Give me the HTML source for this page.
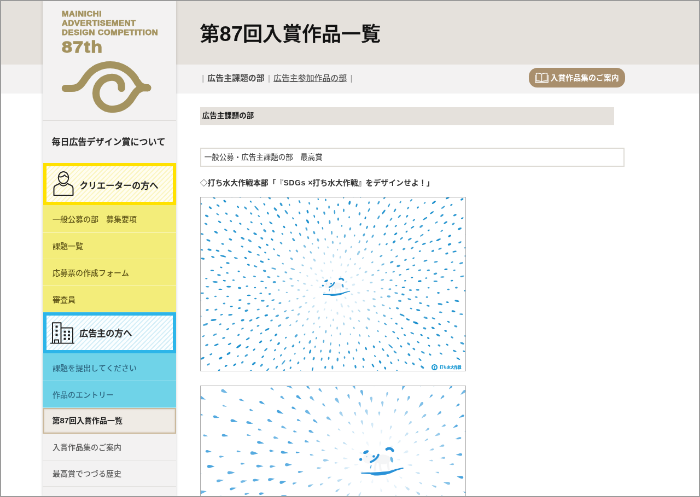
<!DOCTYPE html>
<html lang="ja">
<head>
<meta charset="utf-8">
<title>第87回入賞作品一覧 | 毎日広告デザイン賞</title>
<style>
html,body{margin:0;padding:0;background:#fff;overflow:hidden}
#page{text-spacing-trim:space-all;font-kerning:none}
body{width:700px;height:497px;position:relative;font-family:"Liberation Sans","Noto Sans CJK JP",sans-serif;color:#222}
#frame{position:absolute;left:0;top:0;width:698px;height:495px;border:1px solid #9a9a9a;z-index:10}
#page{position:absolute;left:0;top:0;width:1280px;height:909px;transform:scale(0.546875);transform-origin:0 0;overflow:hidden;will-change:transform}
#page *{box-sizing:border-box}
.abs{position:absolute}
.band1{left:0;top:0;width:1280px;height:117.6px;background:#e5e1dc}
.band2{left:0;top:117.6px;width:1280px;height:53.8px;background:#f3f2f2}
.side{left:77.5px;top:0;width:244.7px;height:909px;background:#f3f2f2;box-shadow:0 0 5px rgba(0,0,0,.18)}
.logo-t{left:35.5px;top:17px;font-weight:bold;font-size:14px;line-height:17px;color:#a4935f;letter-spacing:.55px;white-space:nowrap;-webkit-text-stroke:.75px #a4935f;transform:scaleX(1.07);transform-origin:0 0}
.logo-n{left:35px;top:70.8px;font-weight:bold;font-size:29px;line-height:30px;color:#a4935f;letter-spacing:1.2px;-webkit-text-stroke:1.3px #a4935f;transform:scaleX(1.17);transform-origin:0 0;white-space:nowrap}
.sep{left:0;width:100%;height:1px;background:#dcdad8}
.about{left:17px;top:248.1px;font-size:16px;line-height:24px;font-weight:500;-webkit-text-stroke:.4px #222;color:#222;white-space:nowrap}
.hbox{left:1px;width:243.5px;border:6px solid #ffe100;background:#fffef0}
.hbox .lbl{position:absolute;left:62px;top:0;font-size:16px;font-weight:500;-webkit-text-stroke:.4px #222;color:#222;white-space:nowrap}
.item{left:0;width:244.7px;height:49px;font-size:14px;font-weight:500;padding-left:18.5px;white-space:nowrap;color:#5f5518;border-bottom:1.5px solid rgba(255,255,255,.55)}
.y{background:#f3ed7a}
.c{background:#6fd3e8;color:#2f6882}
.g{background:#f3f2f2;color:#5c5c5c;border-bottom:1.5px solid #e4e2e0}
.dg{font-size:106%}
.act{background:#efebe5;color:#222;font-weight:bold;border:2.5px solid #cbb99c;padding-left:16px;box-shadow:inset 0 0 3px rgba(150,120,80,.35)}
h1{margin:0;left:365.5px;top:35.3px;font-size:36px;line-height:54px;font-weight:500;-webkit-text-stroke:.55px #111;color:#111;white-space:nowrap}
.nav{left:362.9px;top:131px;font-size:14.9px;line-height:24px;color:#666;white-space:nowrap}
.nav b{color:#4a4a4a}
.nav u{color:#5a5a5a;font-weight:500}
.nav i{font-style:normal;color:#999;padding:0 6.3px}
.btn{left:966.5px;top:124.3px;width:176.5px;height:36px;border-radius:15.5px;background:#a98f6d;color:#fff;font-weight:bold;font-size:13.9px;line-height:36px;padding-left:40px;white-space:nowrap}
.sec{left:365.7px;top:195.5px;width:757px;height:33px;background:#e5e1dc;font-size:13.5px;font-weight:bold;line-height:32px;padding-left:4px;color:#222}
.cat{left:365.7px;top:269.5px;width:776px;height:35.5px;border:2px solid #dedbd5;font-size:13.5px;line-height:31px;padding-left:6px;color:#505050;background:#fff;font-weight:500}
.ttl{left:365.7px;top:321.5px;font-size:13.9px;line-height:24px;font-weight:bold;color:#333;white-space:nowrap}
.img{left:365.7px;width:486px;height:319px;border:1.6px solid #a9a9a9;background:#fff;overflow:hidden}
.img svg{position:absolute;left:0;top:0}
</style>
</head>
<body>
<div id="page">
<div class="abs band1"></div><div class="abs band2"></div>
<div class="abs side">
<div class="abs logo-t">MAINICHI<br>ADVERTISEMENT<br>DESIGN COMPETITION</div><div class="abs logo-n">87th</div>
<svg class="abs" style="left:24.900000000000006px;top:102.5px" width="182.86" height="109.71" viewBox="56 56 100 60" fill="none" stroke="#a4935f" stroke-width="7.2" stroke-linecap="round" stroke-linejoin="round">
<path d="M65.5 88 L72 88 C81 88 83 81 87.5 75.5 C93 68.5 101 64.5 110.5 64.5 C122 64.5 131 71 136.5 80 C139 84.5 141.5 87.5 147.8 87.5"/>
<path d="M147.8 87.5 L143 87.5 C138 88.5 135.5 92 132.5 97 C128 104.5 121 108.9 112.2 108.9 C103.4 108.9 96.2 101.7 96.2 92.9 C96.2 84.1 103.4 76.9 112.2 76.9 C118 76.9 121.7 81 121.7 86 L121.7 88"/>
</svg>
<div class="abs sep" style="top:220.43px"></div>
<div class="abs about">毎日広告デザイン賞について</div>
<div class="abs hbox" style="top:298.2px;height:76.7px;background:repeating-linear-gradient(135deg,#fffdf0 0,#fffdf0 4px,#fbf6c4 4px,#fbf6c4 6px)"><svg class="abs" style="left:10px;top:7.7px" width="42" height="50" viewBox="0 0 42 50" fill="none" stroke="#222" stroke-width="2" stroke-linejoin="round" stroke-linecap="round">
<ellipse cx="21" cy="12.8" rx="9.3" ry="10.8"/>
<path d="M12 10.5 C15 12.5 20 11.5 23 8 C25 10.5 28 12 30 11.5"/>
<path d="M14 23.5 L7 27 C4.5 28 3.5 30 3.5 33 L3.5 45 L38.5 45 L38.5 33 C38.5 30 37.5 28 35 27 L28 23.5"/>
<path d="M14 23.5 C17 29 25 29 28 23.5"/>
</svg><div class="lbl" style="top:3.7px;left:60.7px;line-height:64.7px">クリエーターの方へ</div></div>
<div class="abs item y" style="top:374.9px;height:50.7px;line-height:53.2px">一般公募の部　募集要項</div>
<div class="abs item y" style="top:425.6px;height:48.3px;line-height:49.8px">課題一覧</div>
<div class="abs item y" style="top:473.9px;height:48.7px;line-height:51.2px">応募票の作成フォーム</div>
<div class="abs item y" style="top:522.6px;height:48.0px;line-height:51.8px">審査員</div>
<div class="abs hbox" style="top:570.6px;height:75.7px;border-color:#2cb5e9;background:repeating-linear-gradient(135deg,#fbfeff 0,#fbfeff 4px,#d6eff8 4px,#d6eff8 6px)"><svg class="abs" style="left:6.5px;top:9px" width="46" height="43" preserveAspectRatio="none" viewBox="0 0 46 46" fill="none" stroke="#222" stroke-width="2" stroke-linejoin="round">
<path d="M1 44.5 L45 44.5"/>
<path d="M5 44 L5 4.5 L20.5 4.5 L20.5 44"/>
<path d="M20.5 14.5 L42 14.5 L42 44"/>
<path d="M9 44 L9 38 L16 38 L16 44"/>
<g stroke="none" fill="#222">
<rect x="10.5" y="10" width="4" height="4"/><rect x="10.5" y="18" width="4" height="4"/><rect x="10.5" y="26" width="4" height="4"/>
<rect x="25.5" y="20" width="4" height="4"/><rect x="33" y="20" width="4" height="4"/>
<rect x="25.5" y="27" width="4" height="4"/><rect x="33" y="27" width="4" height="4"/>
<rect x="25.5" y="34" width="4" height="4"/><rect x="33" y="34" width="4" height="4"/>
</g></svg><div class="lbl" style="top:1.2px;left:60.7px;line-height:63.6px">広告主の方へ</div></div>
<div class="abs item c" style="top:646.3px;height:50.3px;line-height:54.0px">課題を提出してください</div>
<div class="abs item c" style="top:696.6px;height:49.3px;line-height:50.4px">作品のエントリー</div>
<div class="abs item act" style="top:745.9px;height:47.1px;line-height:42.8px">第<span class="dg">87</span>回入賞作品一覧</div>
<div class="abs item g" style="top:793.0px;height:48.8px;line-height:50.8px">入賞作品集のご案内</div>
<div class="abs item g" style="top:841.8px;height:48.6px;line-height:49.6px">最高賞でつづる歴史</div>
<div class="abs item g" style="top:890.4px;height:48.6px;line-height:49.2px"></div>
</div>
<h1 class="abs">第<b class="dg" style="-webkit-text-stroke:0">87</b>回入賞作品一覧</h1>
<div class="abs nav"><i>|</i><b>広告主課題の部</b><i>|</i><u>広告主参加作品の部</u><i>|</i></div>
<div class="abs btn"><svg class="abs" style="left:11px;top:8px" width="25" height="20" viewBox="0 0 25 20" fill="none" stroke="#fff" stroke-width="1.4" stroke-linejoin="round">
<path d="M12.5 3.5 C10 2 6 1.5 2.5 2 L2.5 16 C6 15.5 10 16 12.5 17.5 C15 16 19 15.5 22.5 16 L22.5 2 C19 1.5 15 2 12.5 3.5 Z M12.5 3.5 L12.5 17.5"/>
<path d="M0.8 5 L0.8 18.5 L24.2 18.5 L24.2 5" stroke-width="1.3"/>
</svg>入賞作品集のご案内</div>
<div class="abs sec">広告主課題の部</div>
<div class="abs cat">一般公募・広告主課題の部　最高賞</div>
<div class="abs ttl">◇打ち水大作戦本部「『<span style="letter-spacing:.6px">SDGs </span>×打ち水大作戦』をデザインせよ！」</div>
<div class="abs img" style="top:360.41px"><svg width="486" height="319" viewBox="0 0 486 319"><g fill="#1a8fcd"><ellipse cx="303.7" cy="238.6" rx="2.8" ry="1.7" transform="rotate(55 303.7 238.6)" opacity="0.53"/><ellipse cx="388.8" cy="304.2" rx="3.1" ry="1.7" transform="rotate(38 388.8 304.2)" opacity="0.85"/><ellipse cx="361.5" cy="297.6" rx="2.1" ry="1.2" transform="rotate(49 361.5 297.6)" opacity="0.85"/><ellipse cx="10.3" cy="148.3" rx="2.1" ry="1.3" transform="rotate(-181 10.3 148.3)" opacity="0.85"/><ellipse cx="462.0" cy="208.2" rx="3.5" ry="1.7" transform="rotate(12 462.0 208.2)" opacity="0.97"/><ellipse cx="441.0" cy="33.0" rx="3.4" ry="1.5" transform="rotate(-38 441.0 33.0)" opacity="0.91"/><ellipse cx="227.7" cy="76.6" rx="2.3" ry="1.3" transform="rotate(-102 227.7 76.6)" opacity="0.60"/><ellipse cx="264.6" cy="183.7" rx="2.5" ry="1.4" transform="rotate(48 264.6 183.7)" opacity="0.17"/><ellipse cx="2.5" cy="66.9" rx="2.7" ry="1.6" transform="rotate(-161 2.5 66.9)" opacity="0.81"/><ellipse cx="134.1" cy="295.6" rx="2.4" ry="1.2" transform="rotate(136 134.1 295.6)" opacity="0.81"/><ellipse cx="374.3" cy="48.2" rx="3.0" ry="1.2" transform="rotate(-46 374.3 48.2)" opacity="0.86"/><ellipse cx="389.8" cy="41.4" rx="2.7" ry="1.3" transform="rotate(-37 389.8 41.4)" opacity="0.85"/><ellipse cx="301.0" cy="37.4" rx="2.4" ry="1.4" transform="rotate(-72 301.0 37.4)" opacity="0.99"/><ellipse cx="-3.1" cy="280.9" rx="2.8" ry="1.3" transform="rotate(150 -3.1 280.9)" opacity="0.87"/><ellipse cx="99.5" cy="66.5" rx="3.6" ry="1.8" transform="rotate(-149 99.5 66.5)" opacity="0.90"/><ellipse cx="481.3" cy="281.3" rx="2.2" ry="1.3" transform="rotate(25 481.3 281.3)" opacity="0.90"/><ellipse cx="138.9" cy="310.4" rx="3.1" ry="1.4" transform="rotate(125 138.9 310.4)" opacity="0.88"/><ellipse cx="262.4" cy="217.7" rx="2.1" ry="1.2" transform="rotate(66 262.4 217.7)" opacity="0.24"/><ellipse cx="97.2" cy="303.7" rx="3.9" ry="1.8" transform="rotate(140 97.2 303.7)" opacity="0.93"/><ellipse cx="337.2" cy="312.1" rx="2.7" ry="1.6" transform="rotate(63 337.2 312.1)" opacity="0.98"/><ellipse cx="437.5" cy="93.7" rx="3.5" ry="1.4" transform="rotate(-24 437.5 93.7)" opacity="0.85"/><ellipse cx="174.4" cy="50.3" rx="2.5" ry="1.5" transform="rotate(-122 174.4 50.3)" opacity="0.98"/><ellipse cx="68.0" cy="17.3" rx="2.5" ry="1.3" transform="rotate(-139 68.0 17.3)" opacity="0.98"/><ellipse cx="144.9" cy="193.2" rx="2.6" ry="1.5" transform="rotate(168 144.9 193.2)" opacity="0.77"/><ellipse cx="-2.3" cy="217.7" rx="3.8" ry="1.8" transform="rotate(171 -2.3 217.7)" opacity="0.87"/><ellipse cx="162.9" cy="97.4" rx="2.2" ry="1.3" transform="rotate(-144 162.9 97.4)" opacity="0.64"/><ellipse cx="400.3" cy="153.2" rx="3.4" ry="1.8" transform="rotate(-7 400.3 153.2)" opacity="0.97"/><ellipse cx="152.0" cy="153.4" rx="2.6" ry="1.4" transform="rotate(-167 152.0 153.4)" opacity="0.59"/><ellipse cx="344.1" cy="14.6" rx="3.8" ry="1.2" transform="rotate(-62 344.1 14.6)" opacity="0.81"/><ellipse cx="477.7" cy="3.5" rx="3.0" ry="1.8" transform="rotate(-29 477.7 3.5)" opacity="0.97"/><ellipse cx="366.4" cy="272.3" rx="2.4" ry="1.4" transform="rotate(47 366.4 272.3)" opacity="0.93"/><ellipse cx="4.9" cy="253.6" rx="2.7" ry="1.2" transform="rotate(155 4.9 253.6)" opacity="0.83"/><ellipse cx="176.9" cy="185.2" rx="2.1" ry="1.2" transform="rotate(169 176.9 185.2)" opacity="0.46"/><ellipse cx="0.5" cy="11.3" rx="2.2" ry="1.2" transform="rotate(-144 0.5 11.3)" opacity="0.93"/><ellipse cx="93.1" cy="243.1" rx="2.5" ry="1.5" transform="rotate(155 93.1 243.1)" opacity="0.85"/><ellipse cx="166.1" cy="112.0" rx="2.9" ry="1.7" transform="rotate(-142 166.1 112.0)" opacity="0.62"/><ellipse cx="255.2" cy="249.6" rx="2.3" ry="1.4" transform="rotate(89 255.2 249.6)" opacity="0.52"/><ellipse cx="49.4" cy="240.7" rx="2.8" ry="1.3" transform="rotate(158 49.4 240.7)" opacity="0.94"/><ellipse cx="389.8" cy="277.1" rx="2.9" ry="1.6" transform="rotate(40 389.8 277.1)" opacity="0.87"/><ellipse cx="14.1" cy="305.3" rx="3.2" ry="1.5" transform="rotate(152 14.1 305.3)" opacity="0.82"/><ellipse cx="41.0" cy="107.4" rx="5.4" ry="1.4" transform="rotate(-164 41.0 107.4)" opacity="0.95"/><ellipse cx="297.7" cy="296.2" rx="3.0" ry="1.7" transform="rotate(64 297.7 296.2)" opacity="0.92"/><ellipse cx="163.9" cy="298.2" rx="2.2" ry="1.3" transform="rotate(124 163.9 298.2)" opacity="0.94"/><ellipse cx="265.3" cy="98.2" rx="3.1" ry="1.5" transform="rotate(-78 265.3 98.2)" opacity="0.45"/><ellipse cx="152.5" cy="54.0" rx="2.5" ry="1.5" transform="rotate(-132 152.5 54.0)" opacity="0.99"/><ellipse cx="34.6" cy="44.7" rx="3.2" ry="1.5" transform="rotate(-148 34.6 44.7)" opacity="0.90"/><ellipse cx="483.4" cy="170.5" rx="2.5" ry="1.5" transform="rotate(3 483.4 170.5)" opacity="0.82"/><ellipse cx="196.5" cy="73.6" rx="2.7" ry="1.6" transform="rotate(-112 196.5 73.6)" opacity="0.74"/><ellipse cx="289.4" cy="266.2" rx="2.8" ry="1.3" transform="rotate(71 289.4 266.2)" opacity="0.75"/><ellipse cx="221.1" cy="133.9" rx="2.4" ry="1.5" transform="rotate(-132 221.1 133.9)" opacity="0.17"/><ellipse cx="410.2" cy="38.7" rx="4.6" ry="1.3" transform="rotate(-33 410.2 38.7)" opacity="0.94"/><ellipse cx="307.4" cy="253.7" rx="1.9" ry="1.2" transform="rotate(58 307.4 253.7)" opacity="0.67"/><ellipse cx="48.7" cy="138.1" rx="2.4" ry="1.4" transform="rotate(-169 48.7 138.1)" opacity="0.89"/><ellipse cx="69.7" cy="272.2" rx="5.4" ry="1.7" transform="rotate(144 69.7 272.2)" opacity="1.00"/><ellipse cx="141.6" cy="144.2" rx="2.3" ry="1.3" transform="rotate(-165 141.6 144.2)" opacity="0.68"/><ellipse cx="478.1" cy="144.3" rx="3.7" ry="1.2" transform="rotate(-11 478.1 144.3)" opacity="0.84"/><ellipse cx="237.2" cy="234.5" rx="2.2" ry="1.2" transform="rotate(92 237.2 234.5)" opacity="0.35"/><ellipse cx="232.6" cy="91.2" rx="1.9" ry="1.1" transform="rotate(-101 232.6 91.2)" opacity="0.42"/><ellipse cx="195.5" cy="43.9" rx="4.0" ry="1.8" transform="rotate(-118 195.5 43.9)" opacity="0.98"/><ellipse cx="182.2" cy="319.2" rx="3.0" ry="1.4" transform="rotate(110 182.2 319.2)" opacity="0.89"/><ellipse cx="242.7" cy="106.7" rx="3.1" ry="1.6" transform="rotate(-90 242.7 106.7)" opacity="0.31"/><ellipse cx="40.0" cy="85.0" rx="2.5" ry="1.5" transform="rotate(-164 40.0 85.0)" opacity="0.86"/><ellipse cx="174.5" cy="253.0" rx="3.5" ry="1.8" transform="rotate(132 174.5 253.0)" opacity="0.75"/><ellipse cx="378.8" cy="223.1" rx="3.5" ry="1.5" transform="rotate(21 378.8 223.1)" opacity="0.98"/><ellipse cx="324.0" cy="244.4" rx="2.0" ry="1.2" transform="rotate(46 324.0 244.4)" opacity="0.71"/><ellipse cx="175.5" cy="226.4" rx="2.6" ry="1.2" transform="rotate(137 175.5 226.4)" opacity="0.59"/><ellipse cx="134.7" cy="154.8" rx="3.1" ry="1.8" transform="rotate(-178 134.7 154.8)" opacity="0.82"/><ellipse cx="316.9" cy="185.9" rx="3.1" ry="1.5" transform="rotate(13 316.9 185.9)" opacity="0.42"/><ellipse cx="1.7" cy="174.9" rx="4.5" ry="1.2" transform="rotate(177 1.7 174.9)" opacity="0.87"/><ellipse cx="119.8" cy="215.6" rx="3.3" ry="1.6" transform="rotate(163 119.8 215.6)" opacity="0.99"/><ellipse cx="224.7" cy="263.1" rx="2.9" ry="1.4" transform="rotate(98 224.7 263.1)" opacity="0.71"/><ellipse cx="167.9" cy="206.6" rx="2.5" ry="1.2" transform="rotate(159 167.9 206.6)" opacity="0.58"/><ellipse cx="168.9" cy="271.6" rx="2.9" ry="1.7" transform="rotate(132 168.9 271.6)" opacity="0.86"/><ellipse cx="425.7" cy="221.1" rx="3.4" ry="1.3" transform="rotate(21 425.7 221.1)" opacity="0.90"/><ellipse cx="459.1" cy="152.1" rx="2.4" ry="1.4" transform="rotate(-9 459.1 152.1)" opacity="0.93"/><ellipse cx="337.6" cy="231.3" rx="3.0" ry="1.3" transform="rotate(32 337.6 231.3)" opacity="0.73"/><ellipse cx="356.8" cy="52.2" rx="2.7" ry="1.3" transform="rotate(-43 356.8 52.2)" opacity="0.82"/><ellipse cx="381.5" cy="185.9" rx="3.4" ry="1.3" transform="rotate(14 381.5 185.9)" opacity="0.87"/><ellipse cx="324.8" cy="133.6" rx="2.2" ry="1.3" transform="rotate(-22 324.8 133.6)" opacity="0.59"/><ellipse cx="9.6" cy="48.3" rx="2.9" ry="1.5" transform="rotate(-157 9.6 48.3)" opacity="0.88"/><ellipse cx="213.9" cy="208.6" rx="2.7" ry="1.5" transform="rotate(124 213.9 208.6)" opacity="0.24"/><ellipse cx="104.2" cy="220.3" rx="3.7" ry="1.3" transform="rotate(156 104.2 220.3)" opacity="0.85"/><ellipse cx="307.6" cy="9.7" rx="2.6" ry="1.4" transform="rotate(-74 307.6 9.7)" opacity="0.81"/><ellipse cx="91.5" cy="7.7" rx="2.2" ry="1.2" transform="rotate(-132 91.5 7.7)" opacity="1.00"/><ellipse cx="225.9" cy="120.4" rx="1.9" ry="1.2" transform="rotate(-117 225.9 120.4)" opacity="0.26"/><ellipse cx="298.2" cy="189.0" rx="2.2" ry="1.3" transform="rotate(22 298.2 189.0)" opacity="0.29"/><ellipse cx="113.5" cy="291.3" rx="3.0" ry="1.3" transform="rotate(138 113.5 291.3)" opacity="0.98"/><ellipse cx="-3.7" cy="128.6" rx="3.9" ry="1.6" transform="rotate(-170 -3.7 128.6)" opacity="0.96"/><ellipse cx="133.6" cy="130.1" rx="4.5" ry="1.3" transform="rotate(-165 133.6 130.1)" opacity="0.72"/><ellipse cx="52.8" cy="267.9" rx="3.4" ry="1.4" transform="rotate(153 52.8 267.9)" opacity="0.92"/><ellipse cx="180.7" cy="7.8" rx="3.0" ry="1.3" transform="rotate(-118 180.7 7.8)" opacity="0.95"/><ellipse cx="283.0" cy="309.4" rx="3.3" ry="1.6" transform="rotate(80 283.0 309.4)" opacity="0.92"/><ellipse cx="400.3" cy="133.0" rx="2.9" ry="1.4" transform="rotate(-15 400.3 133.0)" opacity="0.87"/><ellipse cx="397.6" cy="206.0" rx="3.7" ry="1.6" transform="rotate(11 397.6 206.0)" opacity="0.99"/><ellipse cx="296.7" cy="110.8" rx="1.7" ry="1.0" transform="rotate(-47 296.7 110.8)" opacity="0.46"/><ellipse cx="437.4" cy="-3.7" rx="2.9" ry="1.5" transform="rotate(-41 437.4 -3.7)" opacity="0.94"/><ellipse cx="49.3" cy="181.0" rx="2.4" ry="1.3" transform="rotate(179 49.3 181.0)" opacity="0.91"/><ellipse cx="181.7" cy="137.2" rx="1.7" ry="1.0" transform="rotate(-153 181.7 137.2)" opacity="0.42"/><ellipse cx="107.8" cy="91.3" rx="3.1" ry="1.5" transform="rotate(-146 107.8 91.3)" opacity="0.97"/><ellipse cx="476.4" cy="120.2" rx="3.7" ry="1.6" transform="rotate(-17 476.4 120.2)" opacity="0.81"/><ellipse cx="470.8" cy="294.8" rx="3.8" ry="1.2" transform="rotate(30 470.8 294.8)" opacity="0.97"/><ellipse cx="290.3" cy="81.0" rx="2.8" ry="1.3" transform="rotate(-65 290.3 81.0)" opacity="0.59"/><ellipse cx="201.3" cy="100.4" rx="2.6" ry="1.4" transform="rotate(-122 201.3 100.4)" opacity="0.53"/><ellipse cx="56.2" cy="199.3" rx="2.6" ry="1.2" transform="rotate(175 56.2 199.3)" opacity="0.99"/><ellipse cx="215.1" cy="91.8" rx="2.1" ry="1.3" transform="rotate(-107 215.1 91.8)" opacity="0.48"/><ellipse cx="382.3" cy="76.3" rx="3.9" ry="1.4" transform="rotate(-32 382.3 76.3)" opacity="0.87"/><ellipse cx="128.2" cy="46.6" rx="3.6" ry="1.3" transform="rotate(-140 128.2 46.6)" opacity="0.97"/><ellipse cx="484.5" cy="91.9" rx="3.1" ry="1.2" transform="rotate(-12 484.5 91.9)" opacity="0.89"/><ellipse cx="296.4" cy="151.2" rx="1.8" ry="1.1" transform="rotate(-19 296.4 151.2)" opacity="0.24"/><ellipse cx="363.3" cy="34.6" rx="3.5" ry="1.3" transform="rotate(-47 363.3 34.6)" opacity="0.89"/><ellipse cx="371.6" cy="94.3" rx="2.9" ry="1.7" transform="rotate(-27 371.6 94.3)" opacity="0.83"/><ellipse cx="142.6" cy="169.3" rx="1.9" ry="1.1" transform="rotate(183 142.6 169.3)" opacity="0.67"/><ellipse cx="364.0" cy="189.2" rx="3.0" ry="1.7" transform="rotate(11 364.0 189.2)" opacity="0.80"/><ellipse cx="14.0" cy="78.5" rx="3.9" ry="1.5" transform="rotate(-157 14.0 78.5)" opacity="0.93"/><ellipse cx="221.1" cy="295.7" rx="3.1" ry="1.4" transform="rotate(101 221.1 295.7)" opacity="0.81"/><ellipse cx="434.6" cy="174.4" rx="2.5" ry="1.5" transform="rotate(4 434.6 174.4)" opacity="0.91"/><ellipse cx="207.3" cy="184.2" rx="2.6" ry="1.2" transform="rotate(153 207.3 184.2)" opacity="0.19"/><ellipse cx="345.8" cy="202.7" rx="2.0" ry="1.2" transform="rotate(25 345.8 202.7)" opacity="0.71"/><ellipse cx="234.0" cy="294.1" rx="2.9" ry="1.4" transform="rotate(98 234.0 294.1)" opacity="0.88"/><ellipse cx="186.4" cy="124.1" rx="2.4" ry="1.3" transform="rotate(-150 186.4 124.1)" opacity="0.44"/><ellipse cx="416.8" cy="60.2" rx="2.1" ry="1.3" transform="rotate(-31 416.8 60.2)" opacity="1.00"/><ellipse cx="142.4" cy="267.4" rx="3.0" ry="1.6" transform="rotate(133 142.4 267.4)" opacity="0.98"/><ellipse cx="28.6" cy="269.5" rx="4.3" ry="1.4" transform="rotate(159 28.6 269.5)" opacity="0.98"/><ellipse cx="339.1" cy="137.5" rx="1.9" ry="1.1" transform="rotate(-15 339.1 137.5)" opacity="0.66"/><ellipse cx="137.5" cy="251.3" rx="2.8" ry="1.7" transform="rotate(139 137.5 251.3)" opacity="0.96"/><ellipse cx="71.8" cy="187.6" rx="3.0" ry="1.4" transform="rotate(179 71.8 187.6)" opacity="0.98"/><ellipse cx="397.0" cy="18.4" rx="2.3" ry="1.4" transform="rotate(-47 397.0 18.4)" opacity="0.99"/><ellipse cx="109.6" cy="264.0" rx="3.2" ry="1.5" transform="rotate(141 109.6 264.0)" opacity="0.96"/><ellipse cx="8.6" cy="232.3" rx="4.9" ry="1.7" transform="rotate(161 8.6 232.3)" opacity="0.82"/><ellipse cx="315.0" cy="307.4" rx="3.7" ry="1.4" transform="rotate(60 315.0 307.4)" opacity="0.98"/><ellipse cx="347.9" cy="40.0" rx="3.3" ry="1.4" transform="rotate(-52 347.9 40.0)" opacity="0.80"/><ellipse cx="49.5" cy="120.0" rx="3.2" ry="1.5" transform="rotate(-170 49.5 120.0)" opacity="0.93"/><ellipse cx="31.6" cy="14.8" rx="3.2" ry="1.4" transform="rotate(-148 31.6 14.8)" opacity="0.89"/><ellipse cx="280.2" cy="238.7" rx="2.1" ry="1.3" transform="rotate(60 280.2 238.7)" opacity="0.50"/><ellipse cx="459.6" cy="118.4" rx="2.2" ry="1.2" transform="rotate(-14 459.6 118.4)" opacity="0.93"/><ellipse cx="23.5" cy="224.0" rx="5.3" ry="1.8" transform="rotate(172 23.5 224.0)" opacity="0.91"/><ellipse cx="70.6" cy="202.5" rx="2.7" ry="1.5" transform="rotate(170 70.6 202.5)" opacity="0.95"/><ellipse cx="270.1" cy="199.0" rx="2.5" ry="1.5" transform="rotate(47 270.1 199.0)" opacity="0.18"/><ellipse cx="126.0" cy="176.4" rx="2.5" ry="1.5" transform="rotate(179 126.0 176.4)" opacity="0.81"/><ellipse cx="121.6" cy="241.4" rx="4.3" ry="1.5" transform="rotate(153 121.6 241.4)" opacity="0.99"/><ellipse cx="251.4" cy="39.7" rx="2.9" ry="1.6" transform="rotate(-90 251.4 39.7)" opacity="0.86"/><ellipse cx="111.8" cy="117.4" rx="3.6" ry="1.6" transform="rotate(-160 111.8 117.4)" opacity="0.96"/><ellipse cx="38.1" cy="214.4" rx="2.6" ry="1.2" transform="rotate(163 38.1 214.4)" opacity="0.91"/><ellipse cx="429.2" cy="153.1" rx="3.7" ry="1.2" transform="rotate(1 429.2 153.1)" opacity="0.94"/><ellipse cx="155.7" cy="256.4" rx="1.9" ry="1.2" transform="rotate(138 155.7 256.4)" opacity="0.95"/><ellipse cx="106.2" cy="34.0" rx="2.4" ry="1.3" transform="rotate(-132 106.2 34.0)" opacity="0.81"/><ellipse cx="476.5" cy="213.5" rx="3.5" ry="1.2" transform="rotate(6 476.5 213.5)" opacity="0.87"/><ellipse cx="416.7" cy="165.2" rx="2.1" ry="1.2" transform="rotate(4 416.7 165.2)" opacity="0.84"/><ellipse cx="361.6" cy="125.3" rx="3.4" ry="1.8" transform="rotate(-15 361.6 125.3)" opacity="0.82"/><ellipse cx="43.9" cy="6.8" rx="2.9" ry="1.7" transform="rotate(-142 43.9 6.8)" opacity="0.98"/><ellipse cx="371.6" cy="-3.9" rx="3.9" ry="1.3" transform="rotate(-53 371.6 -3.9)" opacity="0.83"/><ellipse cx="302.0" cy="136.2" rx="2.7" ry="1.6" transform="rotate(-27 302.0 136.2)" opacity="0.35"/><ellipse cx="226.0" cy="28.6" rx="3.1" ry="1.6" transform="rotate(-103 226.0 28.6)" opacity="0.83"/><ellipse cx="72.4" cy="48.0" rx="2.4" ry="1.4" transform="rotate(-149 72.4 48.0)" opacity="0.95"/><ellipse cx="430.9" cy="45.7" rx="3.0" ry="1.2" transform="rotate(-30 430.9 45.7)" opacity="0.86"/><ellipse cx="121.5" cy="86.7" rx="2.6" ry="1.4" transform="rotate(-148 121.5 86.7)" opacity="0.98"/><ellipse cx="75.8" cy="89.9" rx="2.4" ry="1.4" transform="rotate(-160 75.8 89.9)" opacity="0.89"/><ellipse cx="112.2" cy="153.6" rx="3.0" ry="1.2" transform="rotate(-176 112.2 153.6)" opacity="0.94"/><ellipse cx="178.3" cy="302.7" rx="2.8" ry="1.6" transform="rotate(121 178.3 302.7)" opacity="0.83"/><ellipse cx="335.7" cy="216.3" rx="2.9" ry="1.6" transform="rotate(27 335.7 216.3)" opacity="0.64"/><ellipse cx="54.2" cy="214.6" rx="4.0" ry="1.5" transform="rotate(171 54.2 214.6)" opacity="0.85"/><ellipse cx="139.8" cy="216.6" rx="3.4" ry="1.8" transform="rotate(157 139.8 216.6)" opacity="0.75"/><ellipse cx="175.9" cy="98.0" rx="2.9" ry="1.7" transform="rotate(-130 175.9 98.0)" opacity="0.64"/><ellipse cx="357.8" cy="230.8" rx="2.4" ry="1.4" transform="rotate(31 357.8 230.8)" opacity="0.93"/><ellipse cx="76.7" cy="74.7" rx="3.8" ry="1.8" transform="rotate(-150 76.7 74.7)" opacity="0.89"/><ellipse cx="26.1" cy="250.8" rx="3.8" ry="1.3" transform="rotate(155 26.1 250.8)" opacity="0.81"/><ellipse cx="198.6" cy="10.7" rx="2.5" ry="1.5" transform="rotate(-106 198.6 10.7)" opacity="0.81"/><ellipse cx="266.9" cy="319.6" rx="2.0" ry="1.2" transform="rotate(78 266.9 319.6)" opacity="0.99"/><ellipse cx="458.3" cy="13.6" rx="2.4" ry="1.3" transform="rotate(-36 458.3 13.6)" opacity="0.93"/><ellipse cx="116.3" cy="12.5" rx="2.6" ry="1.3" transform="rotate(-127 116.3 12.5)" opacity="0.99"/><ellipse cx="147.1" cy="12.8" rx="3.5" ry="1.8" transform="rotate(-122 147.1 12.8)" opacity="0.87"/><ellipse cx="84.6" cy="162.3" rx="2.3" ry="1.4" transform="rotate(-182 84.6 162.3)" opacity="0.91"/><ellipse cx="194.8" cy="169.7" rx="2.2" ry="1.2" transform="rotate(177 194.8 169.7)" opacity="0.28"/><ellipse cx="451.1" cy="191.6" rx="2.6" ry="1.3" transform="rotate(10 451.1 191.6)" opacity="0.98"/><ellipse cx="182.1" cy="200.4" rx="3.2" ry="1.5" transform="rotate(149 182.1 200.4)" opacity="0.39"/><ellipse cx="404.2" cy="69.2" rx="3.7" ry="1.2" transform="rotate(-35 404.2 69.2)" opacity="0.82"/><ellipse cx="53.1" cy="97.9" rx="3.9" ry="1.5" transform="rotate(-154 53.1 97.9)" opacity="0.82"/><ellipse cx="400.8" cy="98.3" rx="2.1" ry="1.3" transform="rotate(-21 400.8 98.3)" opacity="0.93"/><ellipse cx="180.6" cy="28.2" rx="2.6" ry="1.5" transform="rotate(-112 180.6 28.2)" opacity="0.89"/><ellipse cx="438.7" cy="209.9" rx="3.1" ry="1.4" transform="rotate(8 438.7 209.9)" opacity="0.82"/><ellipse cx="128.2" cy="261.5" rx="2.5" ry="1.2" transform="rotate(140 128.2 261.5)" opacity="0.85"/><ellipse cx="207.9" cy="114.5" rx="3.1" ry="1.7" transform="rotate(-125 207.9 114.5)" opacity="0.35"/><ellipse cx="159.2" cy="0.1" rx="3.5" ry="1.4" transform="rotate(-113 159.2 0.1)" opacity="0.85"/><ellipse cx="258.0" cy="52.0" rx="1.8" ry="1.1" transform="rotate(-85 258.0 52.0)" opacity="0.85"/><ellipse cx="459.6" cy="255.9" rx="2.6" ry="1.5" transform="rotate(28 459.6 255.9)" opacity="0.84"/><ellipse cx="210.5" cy="140.3" rx="2.5" ry="1.3" transform="rotate(-146 210.5 140.3)" opacity="0.18"/><ellipse cx="375.1" cy="302.2" rx="3.2" ry="1.3" transform="rotate(46 375.1 302.2)" opacity="0.92"/><ellipse cx="290.4" cy="29.9" rx="2.9" ry="1.7" transform="rotate(-72 290.4 29.9)" opacity="0.83"/><ellipse cx="12.2" cy="184.7" rx="2.6" ry="1.6" transform="rotate(181 12.2 184.7)" opacity="0.85"/><ellipse cx="132.9" cy="61.8" rx="2.8" ry="1.7" transform="rotate(-137 132.9 61.8)" opacity="0.92"/><ellipse cx="273.8" cy="112.7" rx="1.9" ry="1.1" transform="rotate(-68 273.8 112.7)" opacity="0.36"/><ellipse cx="367.0" cy="75.0" rx="3.4" ry="1.4" transform="rotate(-40 367.0 75.0)" opacity="0.86"/><ellipse cx="169.8" cy="77.2" rx="3.4" ry="1.6" transform="rotate(-129 169.8 77.2)" opacity="0.84"/><ellipse cx="415.8" cy="198.1" rx="2.9" ry="1.4" transform="rotate(14 415.8 198.1)" opacity="0.84"/><ellipse cx="440.7" cy="61.2" rx="2.7" ry="1.2" transform="rotate(-31 440.7 61.2)" opacity="0.83"/><ellipse cx="333.4" cy="278.2" rx="3.2" ry="1.4" transform="rotate(55 333.4 278.2)" opacity="0.85"/><ellipse cx="248.8" cy="187.8" rx="2.3" ry="1.4" transform="rotate(80 248.8 187.8)" opacity="0.17"/><ellipse cx="87.3" cy="123.2" rx="2.6" ry="1.5" transform="rotate(-161 87.3 123.2)" opacity="0.97"/><ellipse cx="150.2" cy="121.2" rx="1.9" ry="1.2" transform="rotate(-159 150.2 121.2)" opacity="0.67"/><ellipse cx="331.7" cy="166.8" rx="2.3" ry="1.2" transform="rotate(5 331.7 166.8)" opacity="0.50"/><ellipse cx="136.4" cy="21.4" rx="3.8" ry="1.8" transform="rotate(-129 136.4 21.4)" opacity="0.90"/><ellipse cx="348.9" cy="96.3" rx="1.9" ry="1.2" transform="rotate(-30 348.9 96.3)" opacity="0.83"/><ellipse cx="455.0" cy="85.8" rx="3.3" ry="1.8" transform="rotate(-21 455.0 85.8)" opacity="0.96"/><ellipse cx="368.2" cy="215.1" rx="5.0" ry="1.4" transform="rotate(26 368.2 215.1)" opacity="0.92"/><ellipse cx="99.1" cy="165.0" rx="2.1" ry="1.2" transform="rotate(-183 99.1 165.0)" opacity="0.96"/><ellipse cx="190.3" cy="-3.0" rx="2.9" ry="1.4" transform="rotate(-113 190.3 -3.0)" opacity="0.89"/><ellipse cx="318.6" cy="290.1" rx="2.1" ry="1.2" transform="rotate(56 318.6 290.1)" opacity="0.93"/><ellipse cx="349.3" cy="118.3" rx="3.4" ry="1.7" transform="rotate(-28 349.3 118.3)" opacity="0.84"/><ellipse cx="147.0" cy="83.5" rx="3.0" ry="1.3" transform="rotate(-136 147.0 83.5)" opacity="0.83"/><ellipse cx="27.0" cy="181.0" rx="2.2" ry="1.3" transform="rotate(173 27.0 181.0)" opacity="0.85"/><ellipse cx="406.2" cy="283.3" rx="3.7" ry="1.5" transform="rotate(30 406.2 283.3)" opacity="0.86"/><ellipse cx="473.5" cy="57.2" rx="3.7" ry="1.8" transform="rotate(-21 473.5 57.2)" opacity="0.94"/><ellipse cx="11.1" cy="33.8" rx="3.4" ry="1.8" transform="rotate(-152 11.1 33.8)" opacity="0.91"/><ellipse cx="86.8" cy="58.2" rx="2.7" ry="1.2" transform="rotate(-144 86.8 58.2)" opacity="0.92"/><ellipse cx="289.7" cy="207.4" rx="3.1" ry="1.2" transform="rotate(45 289.7 207.4)" opacity="0.30"/><ellipse cx="26.3" cy="154.5" rx="4.8" ry="1.4" transform="rotate(-178 26.3 154.5)" opacity="0.85"/><ellipse cx="45.8" cy="59.3" rx="3.2" ry="1.3" transform="rotate(-150 45.8 59.3)" opacity="0.91"/><ellipse cx="393.0" cy="229.2" rx="5.3" ry="1.8" transform="rotate(22 393.0 229.2)" opacity="0.99"/><ellipse cx="47.0" cy="29.6" rx="2.6" ry="1.4" transform="rotate(-142 47.0 29.6)" opacity="0.94"/><ellipse cx="27.8" cy="63.5" rx="3.7" ry="1.7" transform="rotate(-149 27.8 63.5)" opacity="0.93"/><ellipse cx="37.4" cy="127.9" rx="2.2" ry="1.3" transform="rotate(-165 37.4 127.9)" opacity="0.98"/><ellipse cx="240.8" cy="310.8" rx="3.6" ry="1.6" transform="rotate(88 240.8 310.8)" opacity="0.81"/><ellipse cx="142.2" cy="34.2" rx="3.7" ry="1.6" transform="rotate(-130 142.2 34.2)" opacity="1.00"/><ellipse cx="242.4" cy="223.9" rx="2.3" ry="1.4" transform="rotate(94 242.4 223.9)" opacity="0.32"/><ellipse cx="142.2" cy="106.2" rx="3.3" ry="1.2" transform="rotate(-155 142.2 106.2)" opacity="0.89"/><ellipse cx="20.9" cy="133.6" rx="3.2" ry="1.4" transform="rotate(-176 20.9 133.6)" opacity="0.93"/><ellipse cx="43.4" cy="152.2" rx="2.9" ry="1.2" transform="rotate(-170 43.4 152.2)" opacity="1.00"/><ellipse cx="396.5" cy="-2.3" rx="2.5" ry="1.5" transform="rotate(-53 396.5 -2.3)" opacity="0.99"/><ellipse cx="374.4" cy="114.1" rx="2.6" ry="1.5" transform="rotate(-26 374.4 114.1)" opacity="0.81"/><ellipse cx="251.3" cy="13.4" rx="2.5" ry="1.5" transform="rotate(-90 251.3 13.4)" opacity="0.97"/><ellipse cx="190.0" cy="250.5" rx="1.8" ry="1.1" transform="rotate(129 190.0 250.5)" opacity="0.71"/><ellipse cx="200.1" cy="281.9" rx="3.8" ry="1.6" transform="rotate(109 200.1 281.9)" opacity="0.94"/><ellipse cx="69.2" cy="251.4" rx="2.4" ry="1.5" transform="rotate(149 69.2 251.4)" opacity="0.84"/><ellipse cx="204.5" cy="313.9" rx="3.5" ry="1.2" transform="rotate(106 204.5 313.9)" opacity="0.96"/><ellipse cx="487.1" cy="66.9" rx="3.7" ry="1.3" transform="rotate(-24 487.1 66.9)" opacity="0.87"/><ellipse cx="204.2" cy="84.6" rx="1.8" ry="1.1" transform="rotate(-118 204.2 84.6)" opacity="0.54"/><ellipse cx="325.3" cy="36.3" rx="3.6" ry="1.4" transform="rotate(-62 325.3 36.3)" opacity="0.82"/><ellipse cx="79.6" cy="145.7" rx="3.0" ry="1.2" transform="rotate(-170 79.6 145.7)" opacity="0.87"/><ellipse cx="439.3" cy="285.5" rx="3.0" ry="1.2" transform="rotate(29 439.3 285.5)" opacity="0.87"/><ellipse cx="405.2" cy="310.2" rx="3.7" ry="1.8" transform="rotate(41 405.2 310.2)" opacity="0.89"/><ellipse cx="71.1" cy="165.5" rx="3.2" ry="1.7" transform="rotate(-175 71.1 165.5)" opacity="0.88"/><ellipse cx="313.9" cy="118.6" rx="2.0" ry="1.2" transform="rotate(-31 313.9 118.6)" opacity="0.57"/><ellipse cx="178.1" cy="152.2" rx="2.2" ry="1.2" transform="rotate(-168 178.1 152.2)" opacity="0.39"/><ellipse cx="202.9" cy="160.9" rx="1.9" ry="1.2" transform="rotate(-173 202.9 160.9)" opacity="0.21"/><ellipse cx="179.0" cy="169.3" rx="2.4" ry="1.3" transform="rotate(184 179.0 169.3)" opacity="0.41"/><ellipse cx="348.3" cy="302.5" rx="2.9" ry="1.5" transform="rotate(55 348.3 302.5)" opacity="0.88"/><ellipse cx="217.7" cy="236.7" rx="1.7" ry="1.0" transform="rotate(114 217.7 236.7)" opacity="0.45"/><ellipse cx="257.2" cy="123.1" rx="2.8" ry="1.2" transform="rotate(-71 257.2 123.1)" opacity="0.22"/><ellipse cx="268.6" cy="267.3" rx="2.4" ry="1.5" transform="rotate(79 268.6 267.3)" opacity="0.75"/><ellipse cx="64.2" cy="110.8" rx="3.5" ry="1.4" transform="rotate(-163 64.2 110.8)" opacity="0.82"/><ellipse cx="98.4" cy="144.4" rx="2.7" ry="1.2" transform="rotate(-167 98.4 144.4)" opacity="0.86"/><ellipse cx="474.0" cy="82.1" rx="3.1" ry="1.4" transform="rotate(-24 474.0 82.1)" opacity="0.91"/><ellipse cx="429.0" cy="139.4" rx="3.4" ry="1.8" transform="rotate(-14 429.0 139.4)" opacity="0.83"/><ellipse cx="426.4" cy="9.0" rx="4.2" ry="1.5" transform="rotate(-37 426.4 9.0)" opacity="1.00"/><ellipse cx="298.4" cy="68.4" rx="2.9" ry="1.7" transform="rotate(-63 298.4 68.4)" opacity="0.74"/><ellipse cx="464.8" cy="32.3" rx="3.2" ry="1.7" transform="rotate(-26 464.8 32.3)" opacity="0.91"/><ellipse cx="436.7" cy="231.7" rx="2.6" ry="1.5" transform="rotate(23 436.7 231.7)" opacity="0.92"/><ellipse cx="143.5" cy="-3.5" rx="2.3" ry="1.4" transform="rotate(-124 143.5 -3.5)" opacity="0.93"/><ellipse cx="370.6" cy="164.7" rx="3.0" ry="1.4" transform="rotate(-3 370.6 164.7)" opacity="0.94"/><ellipse cx="206.0" cy="199.3" rx="2.7" ry="1.4" transform="rotate(137 206.0 199.3)" opacity="0.28"/><ellipse cx="317.4" cy="53.2" rx="2.6" ry="1.6" transform="rotate(-59 317.4 53.2)" opacity="0.92"/><ellipse cx="279.2" cy="294.3" rx="2.4" ry="1.2" transform="rotate(73 279.2 294.3)" opacity="0.85"/><ellipse cx="124.0" cy="112.9" rx="1.9" ry="1.1" transform="rotate(-161 124.0 112.9)" opacity="0.96"/><ellipse cx="306.9" cy="205.5" rx="2.8" ry="1.7" transform="rotate(28 306.9 205.5)" opacity="0.42"/><ellipse cx="353.6" cy="81.2" rx="3.3" ry="1.7" transform="rotate(-44 353.6 81.2)" opacity="0.95"/><ellipse cx="275.1" cy="90.8" rx="2.0" ry="1.2" transform="rotate(-66 275.1 90.8)" opacity="0.46"/><ellipse cx="261.5" cy="23.4" rx="3.0" ry="1.4" transform="rotate(-89 261.5 23.4)" opacity="0.89"/><ellipse cx="207.4" cy="64.4" rx="3.0" ry="1.7" transform="rotate(-111 207.4 64.4)" opacity="0.77"/><ellipse cx="250.2" cy="296.3" rx="3.4" ry="1.7" transform="rotate(92 250.2 296.3)" opacity="0.82"/><ellipse cx="449.9" cy="102.5" rx="2.8" ry="1.7" transform="rotate(-22 449.9 102.5)" opacity="0.92"/><ellipse cx="396.6" cy="169.0" rx="3.1" ry="1.5" transform="rotate(-1 396.6 169.0)" opacity="0.89"/><ellipse cx="279.5" cy="159.6" rx="2.9" ry="1.8" transform="rotate(-16 279.5 159.6)" opacity="0.17"/><ellipse cx="62.3" cy="62.3" rx="3.3" ry="1.7" transform="rotate(-146 62.3 62.3)" opacity="0.91"/><ellipse cx="46.7" cy="322.2" rx="3.4" ry="1.4" transform="rotate(138 46.7 322.2)" opacity="0.84"/><ellipse cx="302.1" cy="276.3" rx="3.0" ry="1.6" transform="rotate(64 302.1 276.3)" opacity="0.93"/><ellipse cx="76.6" cy="224.5" rx="3.2" ry="1.8" transform="rotate(161 76.6 224.5)" opacity="0.94"/><ellipse cx="162.2" cy="189.5" rx="2.0" ry="1.2" transform="rotate(164 162.2 189.5)" opacity="0.53"/><ellipse cx="311.7" cy="155.8" rx="2.7" ry="1.5" transform="rotate(-5 311.7 155.8)" opacity="0.36"/><ellipse cx="478.3" cy="37.9" rx="2.5" ry="1.3" transform="rotate(-25 478.3 37.9)" opacity="0.97"/><ellipse cx="355.8" cy="-3.7" rx="2.5" ry="1.5" transform="rotate(-53 355.8 -3.7)" opacity="0.81"/><ellipse cx="329.8" cy="107.1" rx="3.0" ry="1.3" transform="rotate(-35 329.8 107.1)" opacity="0.74"/><ellipse cx="357.5" cy="161.2" rx="2.0" ry="1.2" transform="rotate(-3 357.5 161.2)" opacity="0.79"/><ellipse cx="240.3" cy="-3.6" rx="2.0" ry="1.2" transform="rotate(-90 240.3 -3.6)" opacity="0.91"/><ellipse cx="386.7" cy="248.3" rx="3.7" ry="1.2" transform="rotate(28 386.7 248.3)" opacity="0.96"/><ellipse cx="409.5" cy="10.1" rx="2.1" ry="1.2" transform="rotate(-41 409.5 10.1)" opacity="0.84"/><ellipse cx="314.5" cy="70.9" rx="3.3" ry="1.4" transform="rotate(-60 314.5 70.9)" opacity="0.75"/><ellipse cx="24.1" cy="0.7" rx="3.4" ry="1.2" transform="rotate(-141 24.1 0.7)" opacity="0.82"/><ellipse cx="144.2" cy="234.3" rx="3.5" ry="1.5" transform="rotate(147 144.2 234.3)" opacity="0.76"/><ellipse cx="336.5" cy="67.0" rx="2.8" ry="1.5" transform="rotate(-51 336.5 67.0)" opacity="0.88"/><ellipse cx="194.9" cy="143.5" rx="1.8" ry="1.1" transform="rotate(-160 194.9 143.5)" opacity="0.31"/><ellipse cx="321.9" cy="211.2" rx="2.0" ry="1.2" transform="rotate(36 321.9 211.2)" opacity="0.51"/><ellipse cx="411.1" cy="115.6" rx="3.8" ry="1.4" transform="rotate(-20 411.1 115.6)" opacity="0.87"/><ellipse cx="42.8" cy="194.0" rx="2.3" ry="1.4" transform="rotate(177 42.8 194.0)" opacity="0.84"/><ellipse cx="69.5" cy="135.1" rx="2.2" ry="1.3" transform="rotate(-173 69.5 135.1)" opacity="0.95"/><ellipse cx="70.3" cy="-1.8" rx="3.4" ry="1.3" transform="rotate(-142 70.3 -1.8)" opacity="0.86"/><ellipse cx="154.4" cy="276.1" rx="3.2" ry="1.3" transform="rotate(133 154.4 276.1)" opacity="0.82"/><ellipse cx="214.9" cy="45.4" rx="2.7" ry="1.5" transform="rotate(-105 214.9 45.4)" opacity="0.93"/><ellipse cx="165.2" cy="64.3" rx="2.0" ry="1.2" transform="rotate(-124 165.2 64.3)" opacity="0.92"/><ellipse cx="158.1" cy="220.3" rx="3.4" ry="1.7" transform="rotate(153 158.1 220.3)" opacity="0.66"/><ellipse cx="219.7" cy="281.1" rx="2.6" ry="1.4" transform="rotate(101 219.7 281.1)" opacity="0.78"/><ellipse cx="167.3" cy="161.7" rx="2.8" ry="1.2" transform="rotate(-178 167.3 161.7)" opacity="0.51"/><ellipse cx="413.8" cy="182.3" rx="2.2" ry="1.3" transform="rotate(1 413.8 182.3)" opacity="0.93"/><ellipse cx="443.2" cy="18.1" rx="3.9" ry="1.4" transform="rotate(-36 443.2 18.1)" opacity="0.81"/><ellipse cx="417.6" cy="271.2" rx="2.1" ry="1.3" transform="rotate(32 417.6 271.2)" opacity="1.00"/><ellipse cx="51.0" cy="285.5" rx="3.8" ry="1.8" transform="rotate(149 51.0 285.5)" opacity="0.95"/><ellipse cx="188.8" cy="276.2" rx="2.0" ry="1.2" transform="rotate(122 188.8 276.2)" opacity="0.94"/><ellipse cx="122.2" cy="198.6" rx="2.4" ry="1.5" transform="rotate(165 122.2 198.6)" opacity="0.81"/><ellipse cx="76.2" cy="301.5" rx="2.6" ry="1.6" transform="rotate(139 76.2 301.5)" opacity="0.84"/><ellipse cx="484.6" cy="253.7" rx="2.8" ry="1.6" transform="rotate(16 484.6 253.7)" opacity="0.92"/><ellipse cx="90.8" cy="317.9" rx="3.3" ry="1.4" transform="rotate(139 90.8 317.9)" opacity="0.89"/><ellipse cx="487.7" cy="238.0" rx="3.0" ry="1.5" transform="rotate(18 487.7 238.0)" opacity="0.99"/><ellipse cx="450.7" cy="269.3" rx="2.3" ry="1.4" transform="rotate(30 450.7 269.3)" opacity="0.95"/><ellipse cx="1.2" cy="95.6" rx="3.2" ry="1.3" transform="rotate(-164 1.2 95.6)" opacity="0.87"/><ellipse cx="124.4" cy="145.6" rx="3.2" ry="1.5" transform="rotate(-167 124.4 145.6)" opacity="0.77"/><ellipse cx="409.5" cy="239.4" rx="3.1" ry="1.7" transform="rotate(23 409.5 239.4)" opacity="0.87"/><ellipse cx="288.6" cy="101.4" rx="4.3" ry="1.8" transform="rotate(-61 288.6 101.4)" opacity="0.43"/><ellipse cx="386.6" cy="92.5" rx="2.9" ry="1.3" transform="rotate(-30 386.6 92.5)" opacity="0.87"/><ellipse cx="236.7" cy="281.0" rx="3.3" ry="1.7" transform="rotate(98 236.7 281.0)" opacity="0.72"/><ellipse cx="306.8" cy="221.9" rx="3.3" ry="1.6" transform="rotate(46 306.8 221.9)" opacity="0.46"/><ellipse cx="226.1" cy="174.3" rx="2.3" ry="1.4" transform="rotate(158 226.1 174.3)" opacity="0.16"/><ellipse cx="253.9" cy="270.3" rx="2.4" ry="1.2" transform="rotate(80 253.9 270.3)" opacity="0.68"/><ellipse cx="228.4" cy="192.5" rx="2.7" ry="1.3" transform="rotate(130 228.4 192.5)" opacity="0.19"/><ellipse cx="92.2" cy="29.4" rx="2.5" ry="1.5" transform="rotate(-138 92.2 29.4)" opacity="0.85"/><ellipse cx="235.7" cy="44.9" rx="3.5" ry="1.7" transform="rotate(-94 235.7 44.9)" opacity="0.77"/><ellipse cx="453.2" cy="227.4" rx="2.6" ry="1.3" transform="rotate(19 453.2 227.4)" opacity="0.95"/><ellipse cx="352.8" cy="246.2" rx="2.9" ry="1.4" transform="rotate(33 352.8 246.2)" opacity="0.87"/><ellipse cx="318.0" cy="172.5" rx="1.8" ry="1.1" transform="rotate(9 318.0 172.5)" opacity="0.47"/><ellipse cx="206.6" cy="294.7" rx="3.0" ry="1.7" transform="rotate(111 206.6 294.7)" opacity="0.85"/><ellipse cx="-3.9" cy="35.1" rx="3.7" ry="1.3" transform="rotate(-149 -3.9 35.1)" opacity="0.83"/><ellipse cx="254.7" cy="83.9" rx="1.9" ry="1.2" transform="rotate(-84 254.7 83.9)" opacity="0.56"/><ellipse cx="-2.5" cy="80.8" rx="2.4" ry="1.3" transform="rotate(-160 -2.5 80.8)" opacity="0.99"/><ellipse cx="116.7" cy="134.2" rx="2.9" ry="1.8" transform="rotate(-165 116.7 134.2)" opacity="0.81"/><ellipse cx="488.5" cy="199.2" rx="3.4" ry="1.6" transform="rotate(10 488.5 199.2)" opacity="0.88"/><ellipse cx="239.5" cy="64.5" rx="3.4" ry="1.4" transform="rotate(-93 239.5 64.5)" opacity="0.67"/><ellipse cx="18.7" cy="286.7" rx="2.7" ry="1.4" transform="rotate(156 18.7 286.7)" opacity="0.91"/><ellipse cx="239.0" cy="252.4" rx="1.9" ry="1.1" transform="rotate(94 239.0 252.4)" opacity="0.48"/><ellipse cx="62.2" cy="305.9" rx="3.3" ry="1.4" transform="rotate(142 62.2 305.9)" opacity="0.98"/><ellipse cx="352.7" cy="135.9" rx="2.4" ry="1.2" transform="rotate(-21 352.7 135.9)" opacity="0.73"/><ellipse cx="168.2" cy="130.9" rx="4.1" ry="1.5" transform="rotate(-160 168.2 130.9)" opacity="0.50"/><ellipse cx="105.2" cy="205.0" rx="2.7" ry="1.3" transform="rotate(169 105.2 205.0)" opacity="0.80"/><ellipse cx="332.2" cy="150.8" rx="3.1" ry="1.5" transform="rotate(-16 332.2 150.8)" opacity="0.50"/><ellipse cx="283.6" cy="191.8" rx="2.3" ry="1.4" transform="rotate(29 283.6 191.8)" opacity="0.19"/><ellipse cx="241.2" cy="133.9" rx="1.9" ry="1.1" transform="rotate(-94 241.2 133.9)" opacity="0.18"/><ellipse cx="168.7" cy="38.1" rx="2.1" ry="1.2" transform="rotate(-124 168.7 38.1)" opacity="0.89"/><ellipse cx="340.0" cy="85.4" rx="2.2" ry="1.3" transform="rotate(-36 340.0 85.4)" opacity="0.89"/><ellipse cx="-2.9" cy="189.0" rx="3.8" ry="1.3" transform="rotate(171 -2.9 189.0)" opacity="0.81"/><ellipse cx="109.8" cy="175.3" rx="2.4" ry="1.3" transform="rotate(177 109.8 175.3)" opacity="0.90"/><ellipse cx="333.1" cy="122.5" rx="3.2" ry="1.4" transform="rotate(-28 333.1 122.5)" opacity="0.62"/><ellipse cx="485.3" cy="106.9" rx="2.9" ry="1.8" transform="rotate(-10 485.3 106.9)" opacity="0.80"/><ellipse cx="468.5" cy="189.2" rx="4.2" ry="1.6" transform="rotate(11 468.5 189.2)" opacity="0.94"/><ellipse cx="437.7" cy="195.1" rx="4.4" ry="1.8" transform="rotate(11 437.7 195.1)" opacity="0.84"/><ellipse cx="230.2" cy="219.7" rx="2.0" ry="1.2" transform="rotate(103 230.2 219.7)" opacity="0.30"/><ellipse cx="265.5" cy="135.9" rx="2.0" ry="1.2" transform="rotate(-58 265.5 135.9)" opacity="0.19"/><ellipse cx="152.1" cy="316.7" rx="3.0" ry="1.4" transform="rotate(117 152.1 316.7)" opacity="0.87"/><ellipse cx="66.3" cy="33.4" rx="3.3" ry="1.8" transform="rotate(-143 66.3 33.4)" opacity="0.87"/><ellipse cx="212.7" cy="20.5" rx="2.4" ry="1.4" transform="rotate(-97 212.7 20.5)" opacity="0.91"/><ellipse cx="455.2" cy="70.4" rx="3.1" ry="1.7" transform="rotate(-26 455.2 70.4)" opacity="0.96"/><ellipse cx="293.8" cy="322.8" rx="2.9" ry="1.4" transform="rotate(72 293.8 322.8)" opacity="0.80"/><ellipse cx="386.3" cy="146.5" rx="2.0" ry="1.2" transform="rotate(-7 386.3 146.5)" opacity="1.00"/><ellipse cx="489.9" cy="321.7" rx="2.5" ry="1.2" transform="rotate(27 489.9 321.7)" opacity="0.86"/><ellipse cx="122.8" cy="28.9" rx="2.5" ry="1.5" transform="rotate(-127 122.8 28.9)" opacity="0.92"/><ellipse cx="189.7" cy="294.3" rx="2.4" ry="1.5" transform="rotate(113 189.7 294.3)" opacity="0.86"/><ellipse cx="211.4" cy="257.3" rx="2.3" ry="1.4" transform="rotate(114 211.4 257.3)" opacity="0.69"/><ellipse cx="307.6" cy="23.0" rx="3.6" ry="1.3" transform="rotate(-63 307.6 23.0)" opacity="0.86"/><ellipse cx="100.0" cy="185.0" rx="2.2" ry="1.3" transform="rotate(178 100.0 185.0)" opacity="0.91"/><ellipse cx="429.9" cy="117.9" rx="3.6" ry="1.2" transform="rotate(-10 429.9 117.9)" opacity="0.94"/><ellipse cx="373.0" cy="251.5" rx="2.4" ry="1.4" transform="rotate(33 373.0 251.5)" opacity="0.85"/><ellipse cx="225.9" cy="102.5" rx="2.6" ry="1.2" transform="rotate(-104 225.9 102.5)" opacity="0.37"/><ellipse cx="227.7" cy="310.7" rx="2.8" ry="1.6" transform="rotate(103 227.7 310.7)" opacity="0.88"/><ellipse cx="327.3" cy="264.1" rx="1.9" ry="1.2" transform="rotate(47 327.3 264.1)" opacity="0.85"/><ellipse cx="434.8" cy="77.4" rx="4.5" ry="1.5" transform="rotate(-26 434.8 77.4)" opacity="0.96"/><ellipse cx="389.7" cy="124.1" rx="2.6" ry="1.3" transform="rotate(-20 389.7 124.1)" opacity="0.88"/><ellipse cx="86.1" cy="258.6" rx="4.0" ry="1.4" transform="rotate(147 86.1 258.6)" opacity="0.92"/><ellipse cx="281.2" cy="69.7" rx="2.0" ry="1.2" transform="rotate(-72 281.2 69.7)" opacity="0.67"/><ellipse cx="157.4" cy="173.8" rx="1.8" ry="1.1" transform="rotate(178 157.4 173.8)" opacity="0.54"/><ellipse cx="333.6" cy="197.2" rx="3.1" ry="1.4" transform="rotate(24 333.6 197.2)" opacity="0.54"/><ellipse cx="428.2" cy="321.6" rx="2.8" ry="1.3" transform="rotate(36 428.2 321.6)" opacity="0.88"/><ellipse cx="100.1" cy="126.0" rx="3.5" ry="1.4" transform="rotate(-159 100.1 126.0)" opacity="0.84"/><ellipse cx="55.0" cy="43.2" rx="2.4" ry="1.4" transform="rotate(-143 55.0 43.2)" opacity="0.89"/><ellipse cx="327.0" cy="85.9" rx="2.1" ry="1.3" transform="rotate(-50 327.0 85.9)" opacity="0.74"/><ellipse cx="163.8" cy="233.6" rx="1.9" ry="1.1" transform="rotate(146 163.8 233.6)" opacity="0.65"/><ellipse cx="466.3" cy="235.6" rx="3.1" ry="1.6" transform="rotate(16 466.3 235.6)" opacity="0.83"/><ellipse cx="117.1" cy="60.8" rx="3.3" ry="1.8" transform="rotate(-139 117.1 60.8)" opacity="0.81"/><ellipse cx="382.3" cy="321.4" rx="3.8" ry="1.2" transform="rotate(45 382.3 321.4)" opacity="0.88"/><ellipse cx="452.8" cy="168.2" rx="2.3" ry="1.4" transform="rotate(0 452.8 168.2)" opacity="0.88"/><ellipse cx="11.9" cy="205.8" rx="2.8" ry="1.7" transform="rotate(169 11.9 205.8)" opacity="0.83"/><ellipse cx="434.1" cy="251.8" rx="3.8" ry="1.7" transform="rotate(26 434.1 251.8)" opacity="0.91"/><ellipse cx="83.6" cy="207.0" rx="3.3" ry="1.8" transform="rotate(168 83.6 207.0)" opacity="0.88"/><ellipse cx="292.1" cy="49.3" rx="2.5" ry="1.5" transform="rotate(-64 292.1 49.3)" opacity="0.91"/><ellipse cx="279.3" cy="-3.3" rx="3.5" ry="1.3" transform="rotate(-83 279.3 -3.3)" opacity="0.86"/><ellipse cx="273.8" cy="221.5" rx="2.5" ry="1.5" transform="rotate(64 273.8 221.5)" opacity="0.35"/><ellipse cx="285.0" cy="14.5" rx="3.4" ry="1.4" transform="rotate(-76 285.0 14.5)" opacity="0.94"/><ellipse cx="347.2" cy="272.2" rx="5.1" ry="1.2" transform="rotate(42 347.2 272.2)" opacity="0.89"/><ellipse cx="464.0" cy="99.0" rx="3.8" ry="1.4" transform="rotate(-13 464.0 99.0)" opacity="0.95"/><ellipse cx="54.3" cy="76.7" rx="3.2" ry="1.6" transform="rotate(-158 54.3 76.7)" opacity="0.97"/><ellipse cx="92.7" cy="45.4" rx="2.4" ry="1.4" transform="rotate(-144 92.7 45.4)" opacity="0.90"/><ellipse cx="89.7" cy="99.6" rx="3.7" ry="1.5" transform="rotate(-154 89.7 99.6)" opacity="0.92"/><ellipse cx="289.6" cy="225.9" rx="2.1" ry="1.2" transform="rotate(52 289.6 225.9)" opacity="0.42"/><ellipse cx="228.5" cy="4.7" rx="2.1" ry="1.3" transform="rotate(-95 228.5 4.7)" opacity="0.95"/><ellipse cx="193.4" cy="57.7" rx="3.3" ry="1.5" transform="rotate(-110 193.4 57.7)" opacity="0.76"/><ellipse cx="199.7" cy="264.3" rx="3.4" ry="1.8" transform="rotate(118 199.7 264.3)" opacity="0.71"/><ellipse cx="146.7" cy="288.8" rx="2.3" ry="1.3" transform="rotate(123 146.7 288.8)" opacity="0.86"/><ellipse cx="343.8" cy="181.1" rx="3.3" ry="1.8" transform="rotate(9 343.8 181.1)" opacity="0.64"/><ellipse cx="22.2" cy="108.9" rx="3.3" ry="1.4" transform="rotate(-161 22.2 108.9)" opacity="0.94"/><ellipse cx="36.2" cy="293.9" rx="3.6" ry="1.8" transform="rotate(152 36.2 293.9)" opacity="0.99"/><ellipse cx="379.2" cy="19.3" rx="2.5" ry="1.4" transform="rotate(-51 379.2 19.3)" opacity="0.82"/><ellipse cx="263.4" cy="70.6" rx="3.3" ry="1.6" transform="rotate(-84 263.4 70.6)" opacity="0.67"/><ellipse cx="149.3" cy="66.6" rx="2.1" ry="1.3" transform="rotate(-136 149.3 66.6)" opacity="0.88"/><ellipse cx="312.9" cy="99.4" rx="2.5" ry="1.4" transform="rotate(-46 312.9 99.4)" opacity="0.60"/><ellipse cx="273.3" cy="57.6" rx="2.9" ry="1.7" transform="rotate(-73 273.3 57.6)" opacity="0.73"/><ellipse cx="272.2" cy="9.8" rx="3.7" ry="1.8" transform="rotate(-80 272.2 9.8)" opacity="0.98"/><ellipse cx="97.7" cy="278.3" rx="2.7" ry="1.3" transform="rotate(139 97.7 278.3)" opacity="1.00"/><ellipse cx="488.3" cy="21.8" rx="3.5" ry="1.5" transform="rotate(-27 488.3 21.8)" opacity="0.91"/><ellipse cx="365.1" cy="8.6" rx="2.1" ry="1.3" transform="rotate(-58 365.1 8.6)" opacity="0.84"/><ellipse cx="82.1" cy="110.6" rx="2.6" ry="1.6" transform="rotate(-156 82.1 110.6)" opacity="0.99"/><ellipse cx="464.3" cy="280.8" rx="3.5" ry="1.5" transform="rotate(24 464.3 280.8)" opacity="0.88"/><ellipse cx="338.2" cy="254.0" rx="1.9" ry="1.2" transform="rotate(38 338.2 254.0)" opacity="0.91"/><ellipse cx="448.4" cy="131.5" rx="3.1" ry="1.4" transform="rotate(-7 448.4 131.5)" opacity="0.99"/><ellipse cx="324.2" cy="319.2" rx="3.6" ry="1.6" transform="rotate(60 324.2 319.2)" opacity="0.83"/><ellipse cx="11.1" cy="270.0" rx="3.2" ry="1.8" transform="rotate(152 11.1 270.0)" opacity="0.80"/><ellipse cx="186.8" cy="234.1" rx="2.0" ry="1.2" transform="rotate(131 186.8 234.1)" opacity="0.59"/><ellipse cx="421.2" cy="81.0" rx="3.1" ry="1.2" transform="rotate(-30 421.2 81.0)" opacity="0.93"/><ellipse cx="422.7" cy="27.8" rx="3.9" ry="1.4" transform="rotate(-34 422.7 27.8)" opacity="0.98"/><ellipse cx="122.6" cy="315.0" rx="3.4" ry="1.2" transform="rotate(135 122.6 315.0)" opacity="0.86"/><ellipse cx="250.0" cy="211.7" rx="2.7" ry="1.6" transform="rotate(82 250.0 211.7)" opacity="0.22"/><ellipse cx="192.7" cy="192.8" rx="2.2" ry="1.3" transform="rotate(159 192.7 192.8)" opacity="0.34"/><ellipse cx="461.8" cy="48.3" rx="2.9" ry="1.6" transform="rotate(-31 461.8 48.3)" opacity="0.83"/><ellipse cx="135.9" cy="279.3" rx="2.2" ry="1.3" transform="rotate(132 135.9 279.3)" opacity="0.93"/><ellipse cx="6.9" cy="-3.9" rx="3.2" ry="1.6" transform="rotate(-144 6.9 -3.9)" opacity="0.88"/><ellipse cx="261.4" cy="307.3" rx="2.2" ry="1.3" transform="rotate(85 261.4 307.3)" opacity="0.91"/><ellipse cx="51.3" cy="163.2" rx="4.2" ry="1.5" transform="rotate(-178 51.3 163.2)" opacity="0.94"/><ellipse cx="416.1" cy="257.2" rx="2.4" ry="1.4" transform="rotate(32 416.1 257.2)" opacity="0.94"/><ellipse cx="328.1" cy="300.9" rx="3.1" ry="1.7" transform="rotate(60 328.1 300.9)" opacity="0.98"/><ellipse cx="348.0" cy="151.5" rx="2.8" ry="1.6" transform="rotate(-3 348.0 151.5)" opacity="0.66"/><ellipse cx="490.0" cy="50.5" rx="4.5" ry="1.8" transform="rotate(-28 490.0 50.5)" opacity="0.92"/><ellipse cx="83.3" cy="289.1" rx="3.2" ry="1.5" transform="rotate(146 83.3 289.1)" opacity="0.83"/><ellipse cx="384.5" cy="203.1" rx="2.2" ry="1.3" transform="rotate(16 384.5 203.1)" opacity="0.86"/><ellipse cx="104.9" cy="322.8" rx="3.8" ry="1.3" transform="rotate(128 104.9 322.8)" opacity="0.96"/><ellipse cx="359.9" cy="318.6" rx="3.9" ry="1.5" transform="rotate(58 359.9 318.6)" opacity="0.80"/><ellipse cx="3.3" cy="294.1" rx="3.8" ry="1.7" transform="rotate(153 3.3 294.1)" opacity="0.93"/><ellipse cx="463.8" cy="133.2" rx="2.1" ry="1.3" transform="rotate(-11 463.8 133.2)" opacity="0.86"/><ellipse cx="303.9" cy="80.7" rx="2.8" ry="1.3" transform="rotate(-54 303.9 80.7)" opacity="0.65"/><ellipse cx="255.6" cy="145.9" rx="2.5" ry="1.5" transform="rotate(-67 255.6 145.9)" opacity="0.17"/><ellipse cx="33.7" cy="315.9" rx="2.2" ry="1.3" transform="rotate(145 33.7 315.9)" opacity="0.98"/><ellipse cx="348.8" cy="221.3" rx="1.8" ry="1.1" transform="rotate(23 348.8 221.3)" opacity="0.72"/><ellipse cx="188.5" cy="110.2" rx="2.2" ry="1.3" transform="rotate(-134 188.5 110.2)" opacity="0.45"/><ellipse cx="207.1" cy="230.6" rx="1.9" ry="1.1" transform="rotate(122 207.1 230.6)" opacity="0.43"/><ellipse cx="263.0" cy="292.6" rx="2.4" ry="1.4" transform="rotate(86 263.0 292.6)" opacity="0.80"/><ellipse cx="369.8" cy="177.4" rx="2.9" ry="1.7" transform="rotate(11 369.8 177.4)" opacity="0.90"/><ellipse cx="179.0" cy="213.8" rx="2.6" ry="1.6" transform="rotate(143 179.0 213.8)" opacity="0.49"/><ellipse cx="291.1" cy="129.9" rx="2.3" ry="1.2" transform="rotate(-37 291.1 129.9)" opacity="0.33"/><ellipse cx="424.4" cy="97.9" rx="2.8" ry="1.7" transform="rotate(-24 424.4 97.9)" opacity="0.87"/><ellipse cx="364.5" cy="141.5" rx="2.5" ry="1.3" transform="rotate(-13 364.5 141.5)" opacity="0.83"/><ellipse cx="284.9" cy="279.3" rx="2.8" ry="1.3" transform="rotate(77 284.9 279.3)" opacity="0.79"/><ellipse cx="342.0" cy="289.2" rx="2.8" ry="1.7" transform="rotate(52 342.0 289.2)" opacity="0.86"/><ellipse cx="223.4" cy="146.7" rx="2.2" ry="1.3" transform="rotate(-139 223.4 146.7)" opacity="0.20"/><ellipse cx="356.6" cy="66.7" rx="3.3" ry="1.5" transform="rotate(-41 356.6 66.7)" opacity="1.00"/><ellipse cx="424.8" cy="238.7" rx="3.3" ry="1.6" transform="rotate(27 424.8 238.7)" opacity="0.96"/><ellipse cx="27.8" cy="205.1" rx="2.8" ry="1.4" transform="rotate(165 27.8 205.1)" opacity="0.86"/><ellipse cx="290.7" cy="252.4" rx="2.5" ry="1.4" transform="rotate(64 290.7 252.4)" opacity="0.59"/><ellipse cx="441.9" cy="145.5" rx="3.8" ry="1.2" transform="rotate(-2 441.9 145.5)" opacity="0.85"/><ellipse cx="275.6" cy="146.2" rx="2.4" ry="1.4" transform="rotate(-30 275.6 146.2)" opacity="0.18"/><ellipse cx="286.7" cy="141.8" rx="2.6" ry="1.6" transform="rotate(-28 286.7 141.8)" opacity="0.25"/><ellipse cx="288.9" cy="174.3" rx="2.7" ry="1.4" transform="rotate(7 288.9 174.3)" opacity="0.21"/><ellipse cx="172.3" cy="285.7" rx="1.9" ry="1.1" transform="rotate(120 172.3 285.7)" opacity="0.80"/><ellipse cx="340.8" cy="52.3" rx="3.3" ry="1.5" transform="rotate(-52 340.8 52.3)" opacity="0.94"/><ellipse cx="190.0" cy="89.4" rx="2.9" ry="1.7" transform="rotate(-123 190.0 89.4)" opacity="0.56"/><ellipse cx="59.8" cy="231.0" rx="2.7" ry="1.4" transform="rotate(162 59.8 231.0)" opacity="0.86"/><ellipse cx="325.4" cy="226.9" rx="1.9" ry="1.1" transform="rotate(37 325.4 226.9)" opacity="0.59"/><ellipse cx="105.3" cy="105.0" rx="2.8" ry="1.4" transform="rotate(-161 105.3 105.0)" opacity="0.83"/><ellipse cx="305.7" cy="170.5" rx="2.4" ry="1.4" transform="rotate(6 305.7 170.5)" opacity="0.34"/><ellipse cx="411.2" cy="219.9" rx="3.8" ry="1.7" transform="rotate(19 411.2 219.9)" opacity="0.81"/><ellipse cx="397.5" cy="264.6" rx="2.7" ry="1.2" transform="rotate(31 397.5 264.6)" opacity="0.96"/><ellipse cx="3.9" cy="111.9" rx="3.4" ry="1.7" transform="rotate(-168 3.9 111.9)" opacity="0.92"/><ellipse cx="59.9" cy="151.3" rx="2.1" ry="1.3" transform="rotate(-177 59.9 151.3)" opacity="0.93"/><ellipse cx="88.1" cy="179.0" rx="3.5" ry="1.2" transform="rotate(181 88.1 179.0)" opacity="0.98"/><ellipse cx="35.6" cy="231.9" rx="2.4" ry="1.4" transform="rotate(166 35.6 231.9)" opacity="0.80"/><ellipse cx="110.8" cy="48.3" rx="2.0" ry="1.2" transform="rotate(-136 110.8 48.3)" opacity="0.94"/><ellipse cx="273.8" cy="250.4" rx="1.7" ry="1.0" transform="rotate(70 273.8 250.4)" opacity="0.50"/><ellipse cx="325.3" cy="9.7" rx="3.3" ry="1.5" transform="rotate(-64 325.3 9.7)" opacity="0.84"/><ellipse cx="66.3" cy="321.9" rx="3.7" ry="1.8" transform="rotate(143 66.3 321.9)" opacity="0.91"/><ellipse cx="156.4" cy="26.7" rx="4.4" ry="1.5" transform="rotate(-125 156.4 26.7)" opacity="0.87"/><ellipse cx="394.8" cy="81.1" rx="3.6" ry="1.4" transform="rotate(-27 394.8 81.1)" opacity="0.82"/><ellipse cx="261.6" cy="231.1" rx="2.7" ry="1.5" transform="rotate(75 261.6 231.1)" opacity="0.36"/><ellipse cx="202.0" cy="129.7" rx="2.4" ry="1.4" transform="rotate(-142 202.0 129.7)" opacity="0.31"/><ellipse cx="293.1" cy="-2.7" rx="3.4" ry="1.6" transform="rotate(-69 293.1 -2.7)" opacity="1.00"/><ellipse cx="111.7" cy="74.7" rx="2.9" ry="1.7" transform="rotate(-146 111.7 74.7)" opacity="0.86"/><ellipse cx="12.3" cy="163.3" rx="3.3" ry="1.2" transform="rotate(-175 12.3 163.3)" opacity="0.81"/><ellipse cx="119.1" cy="278.2" rx="3.8" ry="1.4" transform="rotate(135 119.1 278.2)" opacity="0.86"/><ellipse cx="487.9" cy="184.3" rx="2.7" ry="1.6" transform="rotate(-2 487.9 184.3)" opacity="0.80"/><ellipse cx="412.3" cy="147.5" rx="2.1" ry="1.2" transform="rotate(-4 412.3 147.5)" opacity="0.93"/><ellipse cx="271.5" cy="36.3" rx="2.0" ry="1.2" transform="rotate(-80 271.5 36.3)" opacity="0.95"/><ellipse cx="316.6" cy="272.9" rx="2.6" ry="1.6" transform="rotate(62 316.6 272.9)" opacity="0.95"/><ellipse cx="218.9" cy="164.3" rx="2.8" ry="1.3" transform="rotate(-175 218.9 164.3)" opacity="0.17"/><ellipse cx="261.4" cy="-1.4" rx="3.3" ry="1.3" transform="rotate(-85 261.4 -1.4)" opacity="0.85"/><ellipse cx="238.9" cy="206.5" rx="1.8" ry="1.1" transform="rotate(103 238.9 206.5)" opacity="0.17"/><ellipse cx="89.7" cy="79.1" rx="3.8" ry="1.7" transform="rotate(-145 89.7 79.1)" opacity="0.81"/><ellipse cx="30.9" cy="30.7" rx="2.8" ry="1.2" transform="rotate(-150 30.9 30.7)" opacity="0.84"/><ellipse cx="214.8" cy="3.1" rx="1.9" ry="1.2" transform="rotate(-107 214.8 3.1)" opacity="0.88"/><ellipse cx="-3.3" cy="157.0" rx="3.4" ry="1.8" transform="rotate(-181 -3.3 157.0)" opacity="0.97"/><ellipse cx="-2.9" cy="316.4" rx="2.5" ry="1.2" transform="rotate(148 -2.9 316.4)" opacity="0.82"/><ellipse cx="87.8" cy="194.2" rx="2.9" ry="1.5" transform="rotate(174 87.8 194.2)" opacity="0.81"/><ellipse cx="267.0" cy="167.0" rx="2.4" ry="1.4" transform="rotate(5 267.0 167.0)" opacity="0.20"/><ellipse cx="394.1" cy="182.3" rx="2.5" ry="1.2" transform="rotate(10 394.1 182.3)" opacity="0.95"/><ellipse cx="257.8" cy="197.5" rx="4.1" ry="1.5" transform="rotate(70 257.8 197.5)" opacity="0.18"/><ellipse cx="84.8" cy="273.7" rx="3.2" ry="1.4" transform="rotate(152 84.8 273.7)" opacity="0.92"/><ellipse cx="106.7" cy="-3.2" rx="5.1" ry="1.8" transform="rotate(-134 106.7 -3.2)" opacity="0.89"/><ellipse cx="42.0" cy="257.0" rx="2.9" ry="1.5" transform="rotate(162 42.0 257.0)" opacity="0.84"/><ellipse cx="16.0" cy="95.5" rx="3.8" ry="1.7" transform="rotate(-164 16.0 95.5)" opacity="0.95"/><ellipse cx="238.0" cy="118.1" rx="2.5" ry="1.2" transform="rotate(-102 238.0 118.1)" opacity="0.25"/><ellipse cx="68.0" cy="290.3" rx="2.1" ry="1.3" transform="rotate(140 68.0 290.3)" opacity="0.81"/><ellipse cx="110.5" cy="248.6" rx="2.2" ry="1.2" transform="rotate(151 110.5 248.6)" opacity="0.89"/><ellipse cx="419.4" cy="287.2" rx="2.5" ry="1.5" transform="rotate(36 419.4 287.2)" opacity="0.90"/><ellipse cx="222.9" cy="56.5" rx="2.7" ry="1.2" transform="rotate(-107 222.9 56.5)" opacity="0.83"/><ellipse cx="130.3" cy="76.9" rx="2.7" ry="1.4" transform="rotate(-140 130.3 76.9)" opacity="0.99"/><ellipse cx="415.6" cy="-2.8" rx="2.7" ry="1.6" transform="rotate(-49 415.6 -2.8)" opacity="0.85"/><ellipse cx="252.8" cy="321.9" rx="2.5" ry="1.5" transform="rotate(92 252.8 321.9)" opacity="0.89"/><ellipse cx="198.0" cy="209.0" rx="2.2" ry="1.3" transform="rotate(140 198.0 209.0)" opacity="0.35"/><ellipse cx="449.2" cy="322.9" rx="3.1" ry="1.2" transform="rotate(35 449.2 322.9)" opacity="0.86"/><ellipse cx="134.1" cy="204.1" rx="1.8" ry="1.1" transform="rotate(164 134.1 204.1)" opacity="0.74"/><ellipse cx="357.4" cy="174.8" rx="3.4" ry="1.3" transform="rotate(9 357.4 174.8)" opacity="0.70"/><ellipse cx="355.0" cy="23.7" rx="3.6" ry="1.4" transform="rotate(-58 355.0 23.7)" opacity="0.91"/><ellipse cx="308.9" cy="-4.0" rx="3.1" ry="1.2" transform="rotate(-72 308.9 -4.0)" opacity="0.82"/><ellipse cx="378.4" cy="131.7" rx="3.3" ry="1.2" transform="rotate(-17 378.4 131.7)" opacity="0.99"/><ellipse cx="91.4" cy="224.8" rx="3.4" ry="1.5" transform="rotate(156 91.4 224.8)" opacity="0.88"/><ellipse cx="280.4" cy="322.9" rx="4.7" ry="1.4" transform="rotate(82 280.4 322.9)" opacity="0.91"/><ellipse cx="435.9" cy="270.7" rx="2.7" ry="1.6" transform="rotate(24 435.9 270.7)" opacity="0.85"/><ellipse cx="359.6" cy="202.7" rx="2.8" ry="1.7" transform="rotate(18 359.6 202.7)" opacity="0.80"/><ellipse cx="387.3" cy="54.6" rx="3.6" ry="1.2" transform="rotate(-34 387.3 54.6)" opacity="0.98"/><ellipse cx="228.7" cy="245.4" rx="3.0" ry="1.6" transform="rotate(100 228.7 245.4)" opacity="0.51"/><ellipse cx="165.0" cy="148.7" rx="2.8" ry="1.7" transform="rotate(-164 165.0 148.7)" opacity="0.52"/><ellipse cx="234.6" cy="17.8" rx="3.0" ry="1.3" transform="rotate(-90 234.6 17.8)" opacity="0.94"/><ellipse cx="271.2" cy="283.0" rx="2.9" ry="1.7" transform="rotate(72 271.2 283.0)" opacity="0.87"/><ellipse cx="237.7" cy="146.5" rx="1.9" ry="1.1" transform="rotate(-109 237.7 146.5)" opacity="0.18"/><ellipse cx="383.4" cy="169.5" rx="2.7" ry="1.6" transform="rotate(4 383.4 169.5)" opacity="0.84"/><ellipse cx="478.0" cy="266.7" rx="3.8" ry="1.8" transform="rotate(22 478.0 266.7)" opacity="0.84"/><ellipse cx="164.3" cy="311.5" rx="2.4" ry="1.4" transform="rotate(118 164.3 311.5)" opacity="0.90"/><ellipse cx="119.2" cy="165.4" rx="2.1" ry="1.3" transform="rotate(-174 119.2 165.4)" opacity="0.84"/><ellipse cx="489.4" cy="157.1" rx="2.6" ry="1.6" transform="rotate(2 489.4 157.1)" opacity="0.93"/><ellipse cx="15.9" cy="322.2" rx="2.4" ry="1.3" transform="rotate(147 15.9 322.2)" opacity="0.92"/><ellipse cx="376.5" cy="62.5" rx="2.3" ry="1.3" transform="rotate(-40 376.5 62.5)" opacity="0.93"/><ellipse cx="489.9" cy="293.3" rx="3.5" ry="1.3" transform="rotate(23 489.9 293.3)" opacity="0.89"/><ellipse cx="125.2" cy="0.0" rx="4.0" ry="1.8" transform="rotate(-124 125.2 0.0)" opacity="0.84"/><ellipse cx="336.6" cy="-0.2" rx="3.9" ry="1.4" transform="rotate(-57 336.6 -0.2)" opacity="0.89"/><ellipse cx="195.3" cy="222.6" rx="2.6" ry="1.4" transform="rotate(130 195.3 222.6)" opacity="0.41"/><ellipse cx="250.2" cy="95.6" rx="1.7" ry="1.0" transform="rotate(-91 250.2 95.6)" opacity="0.40"/><ellipse cx="467.4" cy="165.1" rx="2.5" ry="1.5" transform="rotate(-1 467.4 165.1)" opacity="0.87"/><ellipse cx="403.2" cy="52.9" rx="3.6" ry="1.8" transform="rotate(-37 403.2 52.9)" opacity="0.80"/><ellipse cx="111.1" cy="306.8" rx="3.2" ry="1.7" transform="rotate(133 111.1 306.8)" opacity="0.82"/><ellipse cx="134.0" cy="94.8" rx="2.1" ry="1.3" transform="rotate(-142 134.0 94.8)" opacity="0.88"/><ellipse cx="118.1" cy="100.9" rx="2.1" ry="1.3" transform="rotate(-156 118.1 100.9)" opacity="0.93"/><ellipse cx="380.9" cy="287.6" rx="3.0" ry="1.8" transform="rotate(47 380.9 287.6)" opacity="0.90"/><ellipse cx="195.4" cy="26.0" rx="3.4" ry="1.6" transform="rotate(-105 195.4 26.0)" opacity="0.99"/><ellipse cx="216.0" cy="220.5" rx="2.9" ry="1.7" transform="rotate(114 216.0 220.5)" opacity="0.35"/><ellipse cx="358.4" cy="107.7" rx="2.7" ry="1.2" transform="rotate(-29 358.4 107.7)" opacity="0.83"/><ellipse cx="266.2" cy="154.2" rx="2.3" ry="1.2" transform="rotate(-38 266.2 154.2)" opacity="0.18"/><ellipse cx="330.4" cy="182.5" rx="2.2" ry="1.3" transform="rotate(5 330.4 182.5)" opacity="0.56"/><ellipse cx="389.2" cy="110.9" rx="2.1" ry="1.2" transform="rotate(-24 389.2 110.9)" opacity="0.94"/><ellipse cx="151.2" cy="301.7" rx="5.1" ry="1.2" transform="rotate(128 151.2 301.7)" opacity="0.80"/><ellipse cx="181.9" cy="67.5" rx="3.2" ry="1.3" transform="rotate(-117 181.9 67.5)" opacity="0.82"/><ellipse cx="282.0" cy="122.0" rx="2.3" ry="1.4" transform="rotate(-49 282.0 122.0)" opacity="0.29"/><ellipse cx="255.1" cy="109.4" rx="2.6" ry="1.3" transform="rotate(-82 255.1 109.4)" opacity="0.29"/><ellipse cx="155.7" cy="137.0" rx="2.7" ry="1.5" transform="rotate(-157 155.7 137.0)" opacity="0.64"/><ellipse cx="304.0" cy="54.7" rx="3.2" ry="1.5" transform="rotate(-68 304.0 54.7)" opacity="0.82"/><ellipse cx="129.5" cy="225.0" rx="2.4" ry="1.5" transform="rotate(156 129.5 225.0)" opacity="0.82"/><ellipse cx="297.2" cy="309.6" rx="2.1" ry="1.2" transform="rotate(71 297.2 309.6)" opacity="0.85"/><ellipse cx="416.3" cy="133.1" rx="2.8" ry="1.4" transform="rotate(-8 416.3 133.1)" opacity="0.91"/><ellipse cx="301.1" cy="94.7" rx="2.7" ry="1.6" transform="rotate(-51 301.1 94.7)" opacity="0.53"/><ellipse cx="217.2" cy="322.4" rx="3.6" ry="1.6" transform="rotate(106 217.2 322.4)" opacity="0.87"/><ellipse cx="368.2" cy="239.3" rx="2.4" ry="1.4" transform="rotate(33 368.2 239.3)" opacity="0.88"/><ellipse cx="452.8" cy="-0.2" rx="5.7" ry="1.6" transform="rotate(-34 452.8 -0.2)" opacity="0.99"/><ellipse cx="35.9" cy="167.9" rx="3.7" ry="1.2" transform="rotate(182 35.9 167.9)" opacity="0.97"/><ellipse cx="380.2" cy="267.9" rx="3.3" ry="1.7" transform="rotate(39 380.2 267.9)" opacity="0.82"/><ellipse cx="244.8" cy="26.7" rx="3.8" ry="1.3" transform="rotate(-94 244.8 26.7)" opacity="0.82"/><ellipse cx="205.6" cy="246.3" rx="2.3" ry="1.4" transform="rotate(118 205.6 246.3)" opacity="0.58"/><ellipse cx="276.4" cy="177.1" rx="2.2" ry="1.3" transform="rotate(19 276.4 177.1)" opacity="0.20"/><ellipse cx="162.2" cy="13.5" rx="2.0" ry="1.2" transform="rotate(-113 162.2 13.5)" opacity="0.80"/><ellipse cx="447.7" cy="244.0" rx="2.5" ry="1.5" transform="rotate(22 447.7 244.0)" opacity="0.99"/><ellipse cx="334.5" cy="26.7" rx="4.9" ry="1.5" transform="rotate(-53 334.5 26.7)" opacity="0.93"/><ellipse cx="17.4" cy="18.7" rx="3.1" ry="1.6" transform="rotate(-141 17.4 18.7)" opacity="0.94"/><ellipse cx="401.0" cy="296.5" rx="3.2" ry="1.2" transform="rotate(43 401.0 296.5)" opacity="0.94"/><ellipse cx="46.2" cy="308.0" rx="2.8" ry="1.5" transform="rotate(149 46.2 308.0)" opacity="0.99"/><ellipse cx="489.5" cy="129.1" rx="3.6" ry="1.2" transform="rotate(-14 489.5 129.1)" opacity="0.86"/><ellipse cx="237.6" cy="267.8" rx="2.9" ry="1.2" transform="rotate(99 237.6 267.8)" opacity="0.67"/><ellipse cx="249.5" cy="239.0" rx="2.8" ry="1.2" transform="rotate(93 249.5 239.0)" opacity="0.47"/><ellipse cx="76.3" cy="239.9" rx="2.7" ry="1.2" transform="rotate(154 76.3 239.9)" opacity="0.85"/><ellipse cx="345.9" cy="167.7" rx="2.6" ry="1.5" transform="rotate(-6 345.9 167.7)" opacity="0.61"/><ellipse cx="377.2" cy="34.4" rx="2.8" ry="1.5" transform="rotate(-48 377.2 34.4)" opacity="0.87"/><ellipse cx="249.7" cy="71.9" rx="2.0" ry="1.2" transform="rotate(-86 249.7 71.9)" opacity="0.64"/><ellipse cx="102.1" cy="19.6" rx="5.4" ry="1.3" transform="rotate(-132 102.1 19.6)" opacity="0.86"/><ellipse cx="355.4" cy="282.7" rx="3.5" ry="1.4" transform="rotate(42 355.4 282.7)" opacity="0.88"/><ellipse cx="269.4" cy="123.9" rx="2.6" ry="1.4" transform="rotate(-66 269.4 123.9)" opacity="0.23"/><ellipse cx="105.0" cy="234.8" rx="2.6" ry="1.3" transform="rotate(155 105.0 234.8)" opacity="0.85"/><ellipse cx="226.2" cy="204.8" rx="2.4" ry="1.2" transform="rotate(116 226.2 204.8)" opacity="0.17"/><ellipse cx="488.5" cy="223.5" rx="2.4" ry="1.3" transform="rotate(8 488.5 223.5)" opacity="0.98"/><ellipse cx="317.5" cy="198.9" rx="2.5" ry="1.4" transform="rotate(25 317.5 198.9)" opacity="0.47"/><ellipse cx="132.3" cy="187.7" rx="3.1" ry="1.2" transform="rotate(169 132.3 187.7)" opacity="0.84"/><ellipse cx="154.6" cy="208.1" rx="3.2" ry="1.2" transform="rotate(152 154.6 208.1)" opacity="0.65"/><ellipse cx="307.1" cy="322.4" rx="5.2" ry="1.2" transform="rotate(70 307.1 322.4)" opacity="0.90"/><ellipse cx="398.7" cy="322.4" rx="2.7" ry="1.6" transform="rotate(48 398.7 322.4)" opacity="0.92"/><ellipse cx="30.9" cy="97.4" rx="3.5" ry="1.4" transform="rotate(-161 30.9 97.4)" opacity="0.96"/><ellipse cx="447.7" cy="46.0" rx="3.7" ry="1.5" transform="rotate(-31 447.7 46.0)" opacity="0.96"/><ellipse cx="360.6" cy="257.6" rx="2.5" ry="1.2" transform="rotate(37 360.6 257.6)" opacity="1.00"/><ellipse cx="403.6" cy="251.6" rx="2.5" ry="1.5" transform="rotate(32 403.6 251.6)" opacity="0.96"/><ellipse cx="189.8" cy="158.0" rx="2.7" ry="1.3" transform="rotate(-170 189.8 158.0)" opacity="0.32"/><ellipse cx="314.6" cy="141.7" rx="2.6" ry="1.5" transform="rotate(-17 314.6 141.7)" opacity="0.46"/><ellipse cx="401.9" cy="193.3" rx="2.7" ry="1.4" transform="rotate(11 401.9 193.3)" opacity="0.93"/><ellipse cx="253.4" cy="283.9" rx="1.9" ry="1.1" transform="rotate(84 253.4 283.9)" opacity="0.82"/><ellipse cx="373.9" cy="152.3" rx="2.0" ry="1.2" transform="rotate(-10 373.9 152.3)" opacity="0.92"/><ellipse cx="207.7" cy="34.5" rx="2.8" ry="1.2" transform="rotate(-108 207.7 34.5)" opacity="0.97"/><ellipse cx="113.3" cy="188.9" rx="3.4" ry="1.6" transform="rotate(176 113.3 188.9)" opacity="0.88"/><ellipse cx="188.8" cy="180.9" rx="2.7" ry="1.4" transform="rotate(170 188.8 180.9)" opacity="0.35"/><ellipse cx="180.8" cy="264.6" rx="2.0" ry="1.2" transform="rotate(124 180.8 264.6)" opacity="0.88"/><ellipse cx="408.2" cy="84.9" rx="3.6" ry="1.5" transform="rotate(-23 408.2 84.9)" opacity="0.90"/><ellipse cx="33.4" cy="141.9" rx="3.3" ry="1.4" transform="rotate(-169 33.4 141.9)" opacity="0.92"/><ellipse cx="241.4" cy="82.3" rx="2.7" ry="1.6" transform="rotate(-98 241.4 82.3)" opacity="0.54"/><ellipse cx="172.4" cy="-3.4" rx="2.7" ry="1.6" transform="rotate(-113 172.4 -3.4)" opacity="0.86"/><ellipse cx="209.2" cy="273.1" rx="2.1" ry="1.3" transform="rotate(115 209.2 273.1)" opacity="0.70"/><ellipse cx="81.9" cy="19.2" rx="3.4" ry="1.6" transform="rotate(-134 81.9 19.2)" opacity="0.82"/><ellipse cx="55.3" cy="-2.6" rx="3.6" ry="1.4" transform="rotate(-136 55.3 -2.6)" opacity="0.85"/><ellipse cx="214.5" cy="77.8" rx="2.9" ry="1.8" transform="rotate(-111 214.5 77.8)" opacity="0.64"/><ellipse cx="-3.7" cy="265.7" rx="2.5" ry="1.5" transform="rotate(164 -3.7 265.7)" opacity="0.92"/><ellipse cx="213.0" cy="152.0" rx="2.5" ry="1.5" transform="rotate(-153 213.0 152.0)" opacity="0.17"/><ellipse cx="384.9" cy="5.2" rx="2.9" ry="1.2" transform="rotate(-45 384.9 5.2)" opacity="0.83"/><ellipse cx="277.4" cy="208.4" rx="2.4" ry="1.4" transform="rotate(49 277.4 208.4)" opacity="0.27"/></g><g transform="translate(211.7 133.4) scale(0.1168)">
<ellipse cx="320" cy="238" rx="78" ry="48" fill="#f4f5f6"/>
<circle cx="175" cy="228" r="52" fill="#f7f7f8"/>
<path d="M250 270 L240 350 M290 280 L300 350 M370 270 L380 340" stroke="#f4f5f6" stroke-width="20" stroke-linecap="round" fill="none"/>
<path d="M105 370 C140 368 175 366 200 369 C260 366 330 362 380 356 C430 340 480 326 525 319 L527 331 C480 340 440 356 400 376 C340 396 270 402 230 398 C215 394 205 388 195 386 C160 384 130 384 105 382 Z" fill="#1f8fd0"/>
<ellipse cx="152" cy="165" rx="30" ry="15" transform="rotate(-25 152 165)" fill="#1f8fd0"/>
<circle cx="100" cy="238" r="14.5" fill="#1f8fd0"/>
<circle cx="230" cy="208" r="12.5" fill="#1f8fd0"/>
<circle cx="160" cy="212" r="6" fill="#2f97d6" opacity=".7"/>
<path d="M200 264 C232 250 266 226 277 192" fill="none" stroke="#1f8fd0" stroke-width="21" stroke-linecap="round"/>
<path d="M360 136 C380 124 408 126 420 150" fill="none" stroke="#1f8fd0" stroke-width="27" stroke-linecap="round"/>
<ellipse cx="410" cy="240" rx="14" ry="29" transform="rotate(-16 410 240)" fill="#2f97d6" opacity=".9"/>
<path d="M204 300 L198 323" fill="none" stroke="#2f97d6" stroke-width="10" stroke-linecap="round"/>
</g>
<g transform="translate(427.5 310.5)"><circle cx="0" cy="0" r="4.5" fill="none" stroke="#1496d2" stroke-width="2"/><path d="M1.8 -2.2 C-1.5 -1.5 -1.5 1.5 1.2 2.4" stroke="#1496d2" stroke-width="1.6" fill="none"/>
<text x="9.5" y="2.5" font-size="6.6" font-weight="bold" fill="#1496d2" stroke="#1496d2" stroke-width=".25" font-family="Liberation Sans, Noto Sans CJK JP, sans-serif">打ち水大作戦</text></g></svg></div>
<div class="abs img" style="top:704.91px"><svg width="486" height="319" viewBox="0 0 486 319"><g fill="#3f9fdc"><path d="M-3.7 0 C-1.2 -0.7 0.9 -1.5 1.9 -1.5 C3.1 -1.5 3.7 -0.8 3.7 0 C3.7 0.8 3.1 1.5 1.9 1.5 C0.9 1.5 -1.2 0.7 -3.7 0Z" transform="translate(224.6 117.6) rotate(-173)" opacity="0.47"/><path d="M-5.7 0 C-1.9 -1.1 1.4 -2.2 2.9 -2.2 C4.8 -2.2 5.7 -1.2 5.7 0 C5.7 1.2 4.8 2.2 2.9 2.2 C1.4 2.2 -1.9 1.1 -5.7 0Z" transform="translate(63.0 280.8) rotate(149)" opacity="0.84"/><path d="M-5.0 0 C-1.7 -0.9 1.3 -1.8 2.5 -1.8 C4.2 -1.8 5.0 -1.0 5.0 0 C5.0 1.0 4.2 1.8 2.5 1.8 C1.3 1.8 -1.7 0.9 -5.0 0Z" transform="translate(-2.8 160.4) rotate(179)" opacity="0.75"/><path d="M-4.9 0 C-1.6 -1.0 1.2 -1.9 2.4 -1.9 C4.1 -1.9 4.9 -1.1 4.9 0 C4.9 1.1 4.1 1.9 2.4 1.9 C1.2 1.9 -1.6 1.0 -4.9 0Z" transform="translate(441.4 20.7) rotate(-45)" opacity="0.80"/><path d="M-4.1 0 C-1.4 -0.7 1.0 -1.4 2.1 -1.4 C3.5 -1.4 4.1 -0.8 4.1 0 C4.1 0.8 3.5 1.4 2.1 1.4 C1.0 1.4 -1.4 0.7 -4.1 0Z" transform="translate(270.0 198.1) rotate(136)" opacity="0.40"/><path d="M-5.6 0 C-1.9 -1.1 1.4 -2.3 2.8 -2.3 C4.7 -2.3 5.6 -1.3 5.6 0 C5.6 1.3 4.7 2.3 2.8 2.3 C1.4 2.3 -1.9 1.1 -5.6 0Z" transform="translate(14.4 119.5) rotate(-175)" opacity="0.92"/><path d="M-4.2 0 C-1.4 -0.8 1.1 -1.6 2.1 -1.6 C3.5 -1.6 4.2 -0.9 4.2 0 C4.2 0.9 3.5 1.6 2.1 1.6 C1.1 1.6 -1.4 0.8 -4.2 0Z" transform="translate(355.1 46.0) rotate(-71)" opacity="0.44"/><path d="M-5.8 0 C-1.9 -1.1 1.4 -2.1 2.9 -2.1 C4.9 -2.1 5.8 -1.2 5.8 0 C5.8 1.2 4.9 2.1 2.9 2.1 C1.4 2.1 -1.9 1.1 -5.8 0Z" transform="translate(112.5 30.7) rotate(-151)" opacity="0.94"/><path d="M-3.8 0 C-1.3 -0.7 1.0 -1.4 1.9 -1.4 C3.2 -1.4 3.8 -0.7 3.8 0 C3.8 0.7 3.2 1.4 1.9 1.4 C1.0 1.4 -1.3 0.7 -3.8 0Z" transform="translate(246.1 299.8) rotate(120)" opacity="0.80"/><path d="M-5.8 0 C-1.9 -1.0 1.5 -2.0 2.9 -2.0 C4.9 -2.0 5.8 -1.1 5.8 0 C5.8 1.1 4.9 2.0 2.9 2.0 C1.5 2.0 -1.9 1.0 -5.8 0Z" transform="translate(288.0 250.3) rotate(111)" opacity="0.64"/><path d="M-5.7 0 C-1.9 -1.1 1.4 -2.3 2.9 -2.3 C4.8 -2.3 5.7 -1.3 5.7 0 C5.7 1.3 4.8 2.3 2.9 2.3 C1.4 2.3 -1.9 1.1 -5.7 0Z" transform="translate(185.1 241.0) rotate(140)" opacity="0.89"/><path d="M-6.0 0 C-2.0 -1.1 1.5 -2.2 3.0 -2.2 C5.1 -2.2 6.0 -1.2 6.0 0 C6.0 1.2 5.1 2.2 3.0 2.2 C1.5 2.2 -2.0 1.1 -6.0 0Z" transform="translate(44.6 90.4) rotate(-173)" opacity="0.90"/><path d="M-3.2 0 C-1.1 -0.7 0.8 -1.4 1.6 -1.4 C2.7 -1.4 3.2 -0.8 3.2 0 C3.2 0.8 2.7 1.4 1.6 1.4 C0.8 1.4 -1.1 0.7 -3.2 0Z" transform="translate(329.8 234.2) rotate(87)" opacity="0.44"/><path d="M-5.5 0 C-1.8 -1.2 1.4 -2.4 2.7 -2.4 C4.6 -2.4 5.5 -1.3 5.5 0 C5.5 1.3 4.6 2.4 2.7 2.4 C1.4 2.4 -1.8 1.2 -5.5 0Z" transform="translate(204.0 23.0) rotate(-134)" opacity="0.72"/><path d="M-5.2 0 C-1.7 -1.2 1.3 -2.3 2.6 -2.3 C4.4 -2.3 5.2 -1.3 5.2 0 C5.2 1.3 4.4 2.3 2.6 2.3 C1.3 2.3 -1.7 1.2 -5.2 0Z" transform="translate(126.8 63.5) rotate(-154)" opacity="0.84"/><path d="M-5.3 0 C-1.8 -1.0 1.3 -2.0 2.6 -2.0 C4.4 -2.0 5.3 -1.1 5.3 0 C5.3 1.1 4.4 2.0 2.6 2.0 C1.3 2.0 -1.8 1.0 -5.3 0Z" transform="translate(134.0 261.9) rotate(147)" opacity="0.72"/><path d="M-4.7 0 C-1.6 -1.1 1.2 -2.1 2.4 -2.1 C4.0 -2.1 4.7 -1.2 4.7 0 C4.7 1.2 4.0 2.1 2.4 2.1 C1.2 2.1 -1.6 1.1 -4.7 0Z" transform="translate(93.3 287.4) rotate(149)" opacity="0.92"/><path d="M-4.9 0 C-1.6 -0.9 1.2 -1.9 2.4 -1.9 C4.1 -1.9 4.9 -1.0 4.9 0 C4.9 1.0 4.1 1.9 2.4 1.9 C1.2 1.9 -1.6 0.9 -4.9 0Z" transform="translate(182.7 156.8) rotate(175)" opacity="0.79"/><path d="M-5.3 0 C-1.8 -0.9 1.3 -1.9 2.6 -1.9 C4.4 -1.9 5.3 -1.0 5.3 0 C5.3 1.0 4.4 1.9 2.6 1.9 C1.3 1.9 -1.8 0.9 -5.3 0Z" transform="translate(291.2 34.1) rotate(-106)" opacity="0.61"/><path d="M-4.0 0 C-1.3 -0.8 1.0 -1.6 2.0 -1.6 C3.3 -1.6 4.0 -0.9 4.0 0 C4.0 0.9 3.3 1.6 2.0 1.6 C1.0 1.6 -1.3 0.8 -4.0 0Z" transform="translate(282.2 290.3) rotate(105)" opacity="0.95"/><path d="M-4.2 0 C-1.4 -0.8 1.0 -1.6 2.1 -1.6 C3.5 -1.6 4.2 -0.9 4.2 0 C4.2 0.9 3.5 1.6 2.1 1.6 C1.0 1.6 -1.4 0.8 -4.2 0Z" transform="translate(95.1 -3.3) rotate(-145)" opacity="0.92"/><path d="M-6.7 0 C-2.2 -1.2 1.7 -2.4 3.4 -2.4 C5.6 -2.4 6.7 -1.3 6.7 0 C6.7 1.3 5.6 2.4 3.4 2.4 C1.7 2.4 -2.2 1.2 -6.7 0Z" transform="translate(35.6 172.7) rotate(172)" opacity="0.79"/><path d="M-7.0 0 C-2.3 -1.5 1.8 -3.1 3.5 -3.1 C5.9 -3.1 7.0 -1.7 7.0 0 C7.0 1.7 5.9 3.1 3.5 3.1 C1.8 3.1 -2.3 1.5 -7.0 0Z" transform="translate(2.7 22.1) rotate(-157)" opacity="0.82"/><path d="M-3.6 0 C-1.2 -0.8 0.9 -1.5 1.8 -1.5 C3.0 -1.5 3.6 -0.8 3.6 0 C3.6 0.8 3.0 1.5 1.8 1.5 C0.9 1.5 -1.2 0.8 -3.6 0Z" transform="translate(203.2 125.8) rotate(-169)" opacity="0.64"/><path d="M-5.4 0 C-1.8 -1.1 1.3 -2.2 2.7 -2.2 C4.5 -2.2 5.4 -1.2 5.4 0 C5.4 1.2 4.5 2.2 2.7 2.2 C1.3 2.2 -1.8 1.1 -5.4 0Z" transform="translate(312.1 24.9) rotate(-95)" opacity="0.53"/><path d="M-4.3 0 C-1.4 -0.9 1.1 -1.7 2.1 -1.7 C3.6 -1.7 4.3 -0.9 4.3 0 C4.3 0.9 3.6 1.7 2.1 1.7 C1.1 1.7 -1.4 0.9 -4.3 0Z" transform="translate(282.7 51.1) rotate(-111)" opacity="0.41"/><path d="M-4.5 0 C-1.5 -0.9 1.1 -1.8 2.3 -1.8 C3.8 -1.8 4.5 -1.0 4.5 0 C4.5 1.0 3.8 1.8 2.3 1.8 C1.1 1.8 -1.5 0.9 -4.5 0Z" transform="translate(297.2 311.2) rotate(97)" opacity="0.73"/><path d="M-7.8 0 C-2.6 -1.5 2.0 -3.1 3.9 -3.1 C6.6 -3.1 7.8 -1.7 7.8 0 C7.8 1.7 6.6 3.1 3.9 3.1 C2.0 3.1 -2.6 1.5 -7.8 0Z" transform="translate(127.6 323.3) rotate(134)" opacity="0.81"/><path d="M-5.0 0 C-1.7 -1.0 1.3 -1.9 2.5 -1.9 C4.2 -1.9 5.0 -1.1 5.0 0 C5.0 1.1 4.2 1.9 2.5 1.9 C1.3 1.9 -1.7 1.0 -5.0 0Z" transform="translate(491.0 34.2) rotate(-36)" opacity="0.81"/><path d="M-5.8 0 C-1.9 -1.0 1.5 -2.0 2.9 -2.0 C4.9 -2.0 5.8 -1.1 5.8 0 C5.8 1.1 4.9 2.0 2.9 2.0 C1.5 2.0 -1.9 1.0 -5.8 0Z" transform="translate(345.3 308.8) rotate(84)" opacity="0.79"/><path d="M-5.1 0 C-1.7 -1.1 1.3 -2.2 2.5 -2.2 C4.3 -2.2 5.1 -1.2 5.1 0 C5.1 1.2 4.3 2.2 2.5 2.2 C1.3 2.2 -1.7 1.1 -5.1 0Z" transform="translate(111.9 196.3) rotate(168)" opacity="0.87"/><path d="M-4.0 0 C-1.3 -0.7 1.0 -1.3 2.0 -1.3 C3.3 -1.3 4.0 -0.7 4.0 0 C4.0 0.7 3.3 1.3 2.0 1.3 C1.0 1.3 -1.3 0.7 -4.0 0Z" transform="translate(329.7 189.4) rotate(83)" opacity="0.14"/><path d="M-4.9 0 C-1.6 -1.0 1.2 -2.1 2.4 -2.1 C4.1 -2.1 4.9 -1.1 4.9 0 C4.9 1.1 4.1 2.1 2.4 2.1 C1.2 2.1 -1.6 1.0 -4.9 0Z" transform="translate(379.8 22.7) rotate(-68)" opacity="0.68"/><path d="M-5.2 0 C-1.7 -0.9 1.3 -1.8 2.6 -1.8 C4.4 -1.8 5.2 -1.0 5.2 0 C5.2 1.0 4.4 1.8 2.6 1.8 C1.3 1.8 -1.7 0.9 -5.2 0Z" transform="translate(166.9 280.0) rotate(137)" opacity="0.85"/><path d="M-4.1 0 C-1.4 -0.8 1.0 -1.5 2.0 -1.5 C3.4 -1.5 4.1 -0.8 4.1 0 C4.1 0.8 3.4 1.5 2.0 1.5 C1.0 1.5 -1.4 0.8 -4.1 0Z" transform="translate(284.9 143.4) rotate(170)" opacity="0.10"/><path d="M-3.9 0 C-1.3 -0.6 1.0 -1.3 1.9 -1.3 C3.3 -1.3 3.9 -0.7 3.9 0 C3.9 0.7 3.3 1.3 1.9 1.3 C1.0 1.3 -1.3 0.6 -3.9 0Z" transform="translate(194.3 320.4) rotate(123)" opacity="0.92"/><path d="M-6.5 0 C-2.2 -1.4 1.6 -2.8 3.3 -2.8 C5.5 -2.8 6.5 -1.6 6.5 0 C6.5 1.6 5.5 2.8 3.3 2.8 C1.6 2.8 -2.2 1.4 -6.5 0Z" transform="translate(280.1 0.1) rotate(-113)" opacity="0.75"/><path d="M-3.4 0 C-1.1 -0.7 0.9 -1.4 1.7 -1.4 C2.9 -1.4 3.4 -0.8 3.4 0 C3.4 0.8 2.9 1.4 1.7 1.4 C0.9 1.4 -1.1 0.7 -3.4 0Z" transform="translate(392.1 102.8) rotate(-29)" opacity="0.31"/><path d="M-5.5 0 C-1.8 -0.9 1.4 -1.8 2.7 -1.8 C4.6 -1.8 5.5 -1.0 5.5 0 C5.5 1.0 4.6 1.8 2.7 1.8 C1.4 1.8 -1.8 0.9 -5.5 0Z" transform="translate(209.9 64.6) rotate(-143)" opacity="0.84"/><path d="M-4.8 0 C-1.6 -1.1 1.2 -2.1 2.4 -2.1 C4.0 -2.1 4.8 -1.2 4.8 0 C4.8 1.2 4.0 2.1 2.4 2.1 C1.2 2.1 -1.6 1.1 -4.8 0Z" transform="translate(38.2 202.4) rotate(172)" opacity="0.74"/><path d="M-6.3 0 C-2.1 -1.4 1.6 -2.8 3.2 -2.8 C5.3 -2.8 6.3 -1.6 6.3 0 C6.3 1.6 5.3 2.8 3.2 2.8 C1.6 2.8 -2.1 1.4 -6.3 0Z" transform="translate(45.3 253.5) rotate(158)" opacity="0.87"/><path d="M-6.9 0 C-2.3 -1.3 1.7 -2.6 3.4 -2.6 C5.8 -2.6 6.9 -1.4 6.9 0 C6.9 1.4 5.8 2.6 3.4 2.6 C1.7 2.6 -2.3 1.3 -6.9 0Z" transform="translate(6.6 252.4) rotate(155)" opacity="0.87"/><path d="M-4.6 0 C-1.5 -0.8 1.2 -1.6 2.3 -1.6 C3.9 -1.6 4.6 -0.9 4.6 0 C4.6 0.9 3.9 1.6 2.3 1.6 C1.2 1.6 -1.5 0.8 -4.6 0Z" transform="translate(396.2 158.6) rotate(15)" opacity="0.29"/><path d="M-4.0 0 C-1.3 -0.8 1.0 -1.6 2.0 -1.6 C3.4 -1.6 4.0 -0.9 4.0 0 C4.0 0.9 3.4 1.6 2.0 1.6 C1.0 1.6 -1.3 0.8 -4.0 0Z" transform="translate(347.3 76.2) rotate(-69)" opacity="0.28"/><path d="M-3.1 0 C-1.0 -0.5 0.8 -1.1 1.5 -1.1 C2.6 -1.1 3.1 -0.6 3.1 0 C3.1 0.6 2.6 1.1 1.5 1.1 C0.8 1.1 -1.0 0.5 -3.1 0Z" transform="translate(361.3 134.7) rotate(-2)" opacity="0.12"/><path d="M-4.1 0 C-1.4 -0.8 1.0 -1.7 2.1 -1.7 C3.5 -1.7 4.1 -0.9 4.1 0 C4.1 0.9 3.5 1.7 2.1 1.7 C1.0 1.7 -1.4 0.8 -4.1 0Z" transform="translate(422.2 116.3) rotate(-17)" opacity="0.52"/><path d="M-4.0 0 C-1.3 -0.9 1.0 -1.8 2.0 -1.8 C3.4 -1.8 4.0 -1.0 4.0 0 C4.0 1.0 3.4 1.8 2.0 1.8 C1.0 1.8 -1.3 0.9 -4.0 0Z" transform="translate(326.4 50.6) rotate(-88)" opacity="0.45"/><path d="M-4.3 0 C-1.4 -0.9 1.1 -1.7 2.2 -1.7 C3.6 -1.7 4.3 -0.9 4.3 0 C4.3 0.9 3.6 1.7 2.2 1.7 C1.1 1.7 -1.4 0.9 -4.3 0Z" transform="translate(414.0 79.7) rotate(-37)" opacity="0.60"/><path d="M-7.7 0 C-2.6 -1.5 1.9 -2.9 3.9 -2.9 C6.5 -2.9 7.7 -1.6 7.7 0 C7.7 1.6 6.5 2.9 3.9 2.9 C1.9 2.9 -2.6 1.5 -7.7 0Z" transform="translate(19.2 316.8) rotate(150)" opacity="0.73"/><path d="M-6.0 0 C-2.0 -1.0 1.5 -2.0 3.0 -2.0 C5.0 -2.0 6.0 -1.1 6.0 0 C6.0 1.1 5.0 2.0 3.0 2.0 C1.5 2.0 -2.0 1.0 -6.0 0Z" transform="translate(485.1 194.8) rotate(21)" opacity="0.93"/><path d="M-7.2 0 C-2.4 -1.5 1.8 -3.1 3.6 -3.1 C6.0 -3.1 7.2 -1.7 7.2 0 C7.2 1.7 6.0 3.1 3.6 3.1 C1.8 3.1 -2.4 1.5 -7.2 0Z" transform="translate(97.9 122.7) rotate(-176)" opacity="0.88"/><path d="M-4.6 0 C-1.5 -1.0 1.1 -1.9 2.3 -1.9 C3.8 -1.9 4.6 -1.1 4.6 0 C4.6 1.1 3.8 1.9 2.3 1.9 C1.1 1.9 -1.5 1.0 -4.6 0Z" transform="translate(170.6 40.6) rotate(-153)" opacity="0.93"/><path d="M-4.8 0 C-1.6 -0.8 1.2 -1.6 2.4 -1.6 C4.0 -1.6 4.8 -0.9 4.8 0 C4.8 0.9 4.0 1.6 2.4 1.6 C1.2 1.6 -1.6 0.8 -4.8 0Z" transform="translate(340.6 15.7) rotate(-80)" opacity="0.58"/><path d="M-3.9 0 C-1.3 -0.9 1.0 -1.7 2.0 -1.7 C3.3 -1.7 3.9 -0.9 3.9 0 C3.9 0.9 3.3 1.7 2.0 1.7 C1.0 1.7 -1.3 0.9 -3.9 0Z" transform="translate(218.8 227.0) rotate(138)" opacity="0.84"/><path d="M-5.0 0 C-1.7 -1.1 1.2 -2.2 2.5 -2.2 C4.2 -2.2 5.0 -1.2 5.0 0 C5.0 1.2 4.2 2.2 2.5 2.2 C1.2 2.2 -1.7 1.1 -5.0 0Z" transform="translate(374.6 120.8) rotate(-23)" opacity="0.17"/><path d="M-5.1 0 C-1.7 -0.9 1.3 -1.9 2.6 -1.9 C4.3 -1.9 5.1 -1.0 5.1 0 C5.1 1.0 4.3 1.9 2.6 1.9 C1.3 1.9 -1.7 0.9 -5.1 0Z" transform="translate(435.8 50.0) rotate(-42)" opacity="0.78"/><path d="M-5.8 0 C-1.9 -1.1 1.4 -2.1 2.9 -2.1 C4.8 -2.1 5.8 -1.2 5.8 0 C5.8 1.2 4.8 2.1 2.9 2.1 C1.4 2.1 -1.9 1.1 -5.8 0Z" transform="translate(350.3 249.4) rotate(81)" opacity="0.61"/><path d="M-3.6 0 C-1.2 -0.6 0.9 -1.3 1.8 -1.3 C3.0 -1.3 3.6 -0.7 3.6 0 C3.6 0.7 3.0 1.3 1.8 1.3 C0.9 1.3 -1.2 0.6 -3.6 0Z" transform="translate(432.4 157.7) rotate(13)" opacity="0.57"/><path d="M-6.5 0 C-2.2 -1.5 1.6 -2.9 3.3 -2.9 C5.5 -2.9 6.5 -1.6 6.5 0 C6.5 1.6 5.5 2.9 3.3 2.9 C1.6 2.9 -2.2 1.5 -6.5 0Z" transform="translate(43.4 10.0) rotate(-153)" opacity="0.74"/><path d="M-5.3 0 C-1.8 -1.2 1.3 -2.4 2.7 -2.4 C4.5 -2.4 5.3 -1.3 5.3 0 C5.3 1.3 4.5 2.4 2.7 2.4 C1.3 2.4 -1.8 1.2 -5.3 0Z" transform="translate(257.4 51.4) rotate(-124)" opacity="0.48"/><path d="M-4.3 0 C-1.4 -0.9 1.1 -1.7 2.1 -1.7 C3.6 -1.7 4.3 -1.0 4.3 0 C4.3 1.0 3.6 1.7 2.1 1.7 C1.1 1.7 -1.4 0.9 -4.3 0Z" transform="translate(382.5 67.6) rotate(-48)" opacity="0.44"/><path d="M-4.2 0 C-1.4 -0.9 1.0 -1.7 2.1 -1.7 C3.5 -1.7 4.2 -0.9 4.2 0 C4.2 0.9 3.5 1.7 2.1 1.7 C1.0 1.7 -1.4 0.9 -4.2 0Z" transform="translate(0.5 52.2) rotate(-167)" opacity="0.86"/><path d="M-3.7 0 C-1.2 -0.8 0.9 -1.6 1.9 -1.6 C3.1 -1.6 3.7 -0.9 3.7 0 C3.7 0.9 3.1 1.6 1.9 1.6 C0.9 1.6 -1.2 0.8 -3.7 0Z" transform="translate(221.4 179.1) rotate(154)" opacity="0.50"/><path d="M-5.3 0 C-1.8 -1.0 1.3 -2.1 2.6 -2.1 C4.4 -2.1 5.3 -1.1 5.3 0 C5.3 1.1 4.4 2.1 2.6 2.1 C1.3 2.1 -1.8 1.0 -5.3 0Z" transform="translate(254.7 171.8) rotate(157)" opacity="0.33"/><path d="M-4.0 0 C-1.3 -0.8 1.0 -1.6 2.0 -1.6 C3.4 -1.6 4.0 -0.9 4.0 0 C4.0 0.9 3.4 1.6 2.0 1.6 C1.0 1.6 -1.3 0.8 -4.0 0Z" transform="translate(314.1 173.5) rotate(103)" opacity="0.09"/><path d="M-4.6 0 C-1.5 -1.0 1.1 -2.0 2.3 -2.0 C3.8 -2.0 4.6 -1.1 4.6 0 C4.6 1.1 3.8 2.0 2.3 2.0 C1.1 2.0 -1.5 1.0 -4.6 0Z" transform="translate(143.6 234.0) rotate(148)" opacity="0.73"/><path d="M-5.0 0 C-1.7 -0.8 1.3 -1.7 2.5 -1.7 C4.2 -1.7 5.0 -0.9 5.0 0 C5.0 0.9 4.2 1.7 2.5 1.7 C1.3 1.7 -1.7 0.8 -5.0 0Z" transform="translate(238.1 204.8) rotate(145)" opacity="0.56"/><path d="M-4.5 0 C-1.5 -0.9 1.1 -1.7 2.2 -1.7 C3.8 -1.7 4.5 -1.0 4.5 0 C4.5 1.0 3.8 1.7 2.2 1.7 C1.1 1.7 -1.5 0.9 -4.5 0Z" transform="translate(109.1 266.5) rotate(154)" opacity="0.77"/><path d="M-2.8 0 C-0.9 -0.5 0.7 -1.0 1.4 -1.0 C2.3 -1.0 2.8 -0.5 2.8 0 C2.8 0.5 2.3 1.0 1.4 1.0 C0.7 1.0 -0.9 0.5 -2.8 0Z" transform="translate(357.3 200.9) rotate(58)" opacity="0.33"/><path d="M-4.4 0 C-1.5 -0.7 1.1 -1.5 2.2 -1.5 C3.7 -1.5 4.4 -0.8 4.4 0 C4.4 0.8 3.7 1.5 2.2 1.5 C1.1 1.5 -1.5 0.7 -4.4 0Z" transform="translate(291.3 197.0) rotate(121)" opacity="0.30"/><path d="M-5.8 0 C-1.9 -1.2 1.4 -2.4 2.9 -2.4 C4.8 -2.4 5.8 -1.3 5.8 0 C5.8 1.3 4.8 2.4 2.9 2.4 C1.4 2.4 -1.9 1.2 -5.8 0Z" transform="translate(28.3 56.6) rotate(-165)" opacity="0.89"/><path d="M-4.3 0 C-1.4 -0.8 1.1 -1.6 2.1 -1.6 C3.6 -1.6 4.3 -0.9 4.3 0 C4.3 0.9 3.6 1.6 2.1 1.6 C1.1 1.6 -1.4 0.8 -4.3 0Z" transform="translate(160.2 253.1) rotate(146)" opacity="0.93"/><path d="M-3.9 0 C-1.3 -0.7 1.0 -1.5 1.9 -1.5 C3.2 -1.5 3.9 -0.8 3.9 0 C3.9 0.8 3.2 1.5 1.9 1.5 C1.0 1.5 -1.3 0.7 -3.9 0Z" transform="translate(485.2 269.7) rotate(43)" opacity="0.93"/><path d="M-6.4 0 C-2.1 -1.2 1.6 -2.4 3.2 -2.4 C5.4 -2.4 6.4 -1.3 6.4 0 C6.4 1.3 5.4 2.4 3.2 2.4 C1.6 2.4 -2.1 1.2 -6.4 0Z" transform="translate(89.7 67.2) rotate(-167)" opacity="0.88"/><path d="M-3.8 0 C-1.3 -0.8 0.9 -1.5 1.9 -1.5 C3.2 -1.5 3.8 -0.8 3.8 0 C3.8 0.8 3.2 1.5 1.9 1.5 C0.9 1.5 -1.3 0.8 -3.8 0Z" transform="translate(461.2 317.1) rotate(55)" opacity="0.74"/><path d="M-5.1 0 C-1.7 -0.9 1.3 -1.9 2.6 -1.9 C4.3 -1.9 5.1 -1.0 5.1 0 C5.1 1.0 4.3 1.9 2.6 1.9 C1.3 1.9 -1.7 0.9 -5.1 0Z" transform="translate(178.0 204.1) rotate(159)" opacity="0.90"/><path d="M-6.9 0 C-2.3 -1.2 1.7 -2.4 3.4 -2.4 C5.8 -2.4 6.9 -1.3 6.9 0 C6.9 1.3 5.8 2.4 3.4 2.4 C1.7 2.4 -2.3 1.2 -6.9 0Z" transform="translate(212.7 306.4) rotate(128)" opacity="0.74"/><path d="M-4.9 0 C-1.6 -1.0 1.2 -1.9 2.5 -1.9 C4.1 -1.9 4.9 -1.1 4.9 0 C4.9 1.1 4.1 1.9 2.5 1.9 C1.2 1.9 -1.6 1.0 -4.9 0Z" transform="translate(295.4 67.1) rotate(-108)" opacity="0.36"/><path d="M-5.6 0 C-1.9 -1.0 1.4 -2.1 2.8 -2.1 C4.7 -2.1 5.6 -1.2 5.6 0 C5.6 1.2 4.7 2.1 2.8 2.1 C1.4 2.1 -1.9 1.0 -5.6 0Z" transform="translate(443.1 302.1) rotate(49)" opacity="0.85"/><path d="M-5.1 0 C-1.7 -1.1 1.3 -2.2 2.6 -2.2 C4.3 -2.2 5.1 -1.2 5.1 0 C5.1 1.2 4.3 2.2 2.6 2.2 C1.3 2.2 -1.7 1.1 -5.1 0Z" transform="translate(152.2 75.8) rotate(-157)" opacity="0.74"/><path d="M-3.5 0 C-1.2 -0.8 0.9 -1.5 1.7 -1.5 C2.9 -1.5 3.5 -0.8 3.5 0 C3.5 0.8 2.9 1.5 1.7 1.5 C0.9 1.5 -1.2 0.8 -3.5 0Z" transform="translate(294.9 156.8) rotate(143)" opacity="0.09"/><path d="M-5.6 0 C-1.9 -1.0 1.4 -2.0 2.8 -2.0 C4.7 -2.0 5.6 -1.1 5.6 0 C5.6 1.1 4.7 2.0 2.8 2.0 C1.4 2.0 -1.9 1.0 -5.6 0Z" transform="translate(131.6 146.8) rotate(175)" opacity="0.82"/><path d="M-4.4 0 C-1.5 -1.0 1.1 -2.0 2.2 -2.0 C3.7 -2.0 4.4 -1.1 4.4 0 C4.4 1.1 3.7 2.0 2.2 2.0 C1.1 2.0 -1.5 1.0 -4.4 0Z" transform="translate(194.3 101.6) rotate(-165)" opacity="0.80"/><path d="M-6.2 0 C-2.1 -1.1 1.5 -2.2 3.1 -2.2 C5.2 -2.2 6.2 -1.2 6.2 0 C6.2 1.2 5.2 2.2 3.1 2.2 C1.5 2.2 -2.1 1.1 -6.2 0Z" transform="translate(78.9 174.0) rotate(169)" opacity="0.74"/><path d="M-4.9 0 C-1.6 -1.0 1.2 -2.1 2.4 -2.1 C4.1 -2.1 4.9 -1.1 4.9 0 C4.9 1.1 4.1 2.1 2.4 2.1 C1.2 2.1 -1.6 1.0 -4.9 0Z" transform="translate(87.9 229.5) rotate(156)" opacity="0.75"/><path d="M-4.7 0 C-1.6 -1.0 1.2 -1.9 2.3 -1.9 C3.9 -1.9 4.7 -1.1 4.7 0 C4.7 1.1 3.9 1.9 2.3 1.9 C1.2 1.9 -1.6 1.0 -4.7 0Z" transform="translate(305.4 105.8) rotate(-116)" opacity="0.09"/><path d="M-6.0 0 C-2.0 -1.1 1.5 -2.1 3.0 -2.1 C5.0 -2.1 6.0 -1.2 6.0 0 C6.0 1.2 5.0 2.1 3.0 2.1 C1.5 2.1 -2.0 1.1 -6.0 0Z" transform="translate(373.3 286.5) rotate(67)" opacity="0.93"/><path d="M-4.2 0 C-1.4 -0.7 1.0 -1.5 2.1 -1.5 C3.5 -1.5 4.2 -0.8 4.2 0 C4.2 0.8 3.5 1.5 2.1 1.5 C1.0 1.5 -1.4 0.7 -4.2 0Z" transform="translate(263.9 105.0) rotate(-153)" opacity="0.31"/><path d="M-4.8 0 C-1.6 -0.9 1.2 -1.9 2.4 -1.9 C4.0 -1.9 4.8 -1.0 4.8 0 C4.8 1.0 4.0 1.9 2.4 1.9 C1.2 1.9 -1.6 0.9 -4.8 0Z" transform="translate(228.4 280.9) rotate(124)" opacity="0.95"/><path d="M-6.0 0 C-2.0 -1.3 1.5 -2.7 3.0 -2.7 C5.0 -2.7 6.0 -1.5 6.0 0 C6.0 1.5 5.0 2.7 3.0 2.7 C1.5 2.7 -2.0 1.3 -6.0 0Z" transform="translate(250.0 26.8) rotate(-126)" opacity="0.66"/><path d="M-4.7 0 C-1.6 -0.8 1.2 -1.6 2.4 -1.6 C4.0 -1.6 4.7 -0.9 4.7 0 C4.7 0.9 4.0 1.6 2.4 1.6 C1.2 1.6 -1.6 0.8 -4.7 0Z" transform="translate(-0.6 298.8) rotate(155)" opacity="0.89"/><path d="M-5.0 0 C-1.7 -0.9 1.3 -1.8 2.5 -1.8 C4.2 -1.8 5.0 -1.0 5.0 0 C5.0 1.0 4.2 1.8 2.5 1.8 C1.3 1.8 -1.7 0.9 -5.0 0Z" transform="translate(75.3 25.8) rotate(-159)" opacity="0.84"/><path d="M-7.4 0 C-2.5 -1.5 1.8 -3.0 3.7 -3.0 C6.2 -3.0 7.4 -1.6 7.4 0 C7.4 1.6 6.2 3.0 3.7 3.0 C1.8 3.0 -2.5 1.5 -7.4 0Z" transform="translate(404.4 323.4) rotate(67)" opacity="0.92"/><path d="M-7.5 0 C-2.5 -1.5 1.9 -3.0 3.7 -3.0 C6.3 -3.0 7.5 -1.6 7.5 0 C7.5 1.6 6.3 3.0 3.7 3.0 C1.9 3.0 -2.5 1.5 -7.5 0Z" transform="translate(61.2 222.5) rotate(162)" opacity="0.88"/><path d="M-3.7 0 C-1.2 -0.8 0.9 -1.5 1.9 -1.5 C3.1 -1.5 3.7 -0.8 3.7 0 C3.7 0.8 3.1 1.5 1.9 1.5 C0.9 1.5 -1.2 0.8 -3.7 0Z" transform="translate(172.8 83.3) rotate(-164)" opacity="0.84"/><path d="M-7.0 0 C-2.3 -1.2 1.7 -2.4 3.5 -2.4 C5.9 -2.4 7.0 -1.3 7.0 0 C7.0 1.3 5.9 2.4 3.5 2.4 C1.7 2.4 -2.3 1.2 -7.0 0Z" transform="translate(153.6 121.4) rotate(-174)" opacity="0.93"/><path d="M-4.7 0 C-1.6 -0.9 1.2 -1.8 2.4 -1.8 C4.0 -1.8 4.7 -1.0 4.7 0 C4.7 1.0 4.0 1.8 2.4 1.8 C1.2 1.8 -1.6 0.9 -4.7 0Z" transform="translate(84.9 196.7) rotate(168)" opacity="0.75"/><path d="M-4.6 0 C-1.5 -0.8 1.2 -1.6 2.3 -1.6 C3.9 -1.6 4.6 -0.9 4.6 0 C4.6 0.9 3.9 1.6 2.3 1.6 C1.2 1.6 -1.5 0.8 -4.6 0Z" transform="translate(426.5 182.9) rotate(23)" opacity="0.56"/><path d="M-5.6 0 C-1.9 -1.2 1.4 -2.4 2.8 -2.4 C4.7 -2.4 5.6 -1.3 5.6 0 C5.6 1.3 4.7 2.4 2.8 2.4 C1.4 2.4 -1.9 1.2 -5.6 0Z" transform="translate(-1.3 220.5) rotate(163)" opacity="0.73"/><path d="M-6.4 0 C-2.1 -1.1 1.6 -2.1 3.2 -2.1 C5.4 -2.1 6.4 -1.2 6.4 0 C6.4 1.2 5.4 2.1 3.2 2.1 C1.6 2.1 -2.1 1.1 -6.4 0Z" transform="translate(425.1 218.1) rotate(40)" opacity="0.70"/><path d="M-5.9 0 C-2.0 -1.1 1.5 -2.2 3.0 -2.2 C5.0 -2.2 5.9 -1.2 5.9 0 C5.9 1.2 5.0 2.2 3.0 2.2 C1.5 2.2 -2.0 1.1 -5.9 0Z" transform="translate(446.3 243.8) rotate(37)" opacity="0.85"/><path d="M-6.6 0 C-2.2 -1.2 1.7 -2.4 3.3 -2.4 C5.6 -2.4 6.6 -1.3 6.6 0 C6.6 1.3 5.6 2.4 3.3 2.4 C1.7 2.4 -2.2 1.2 -6.6 0Z" transform="translate(109.6 103.6) rotate(-169)" opacity="0.92"/><path d="M-2.9 0 C-1.0 -0.5 0.7 -1.0 1.5 -1.0 C2.5 -1.0 2.9 -0.5 2.9 0 C2.9 0.5 2.5 1.0 1.5 1.0 C0.7 1.0 -1.0 0.5 -2.9 0Z" transform="translate(293.2 174.5) rotate(130)" opacity="0.13"/><path d="M-4.2 0 C-1.4 -0.7 1.1 -1.5 2.1 -1.5 C3.6 -1.5 4.2 -0.8 4.2 0 C4.2 0.8 3.6 1.5 2.1 1.5 C1.1 1.5 -1.4 0.7 -4.2 0Z" transform="translate(456.6 2.7) rotate(-47)" opacity="0.93"/><path d="M-6.6 0 C-2.2 -1.3 1.7 -2.7 3.3 -2.7 C5.6 -2.7 6.6 -1.5 6.6 0 C6.6 1.5 5.6 2.7 3.3 2.7 C1.7 2.7 -2.2 1.3 -6.6 0Z" transform="translate(61.0 63.8) rotate(-169)" opacity="0.91"/><path d="M-3.0 0 C-1.0 -0.5 0.8 -1.0 1.5 -1.0 C2.6 -1.0 3.0 -0.6 3.0 0 C3.0 0.6 2.6 1.0 1.5 1.0 C0.8 1.0 -1.0 0.5 -3.0 0Z" transform="translate(396.5 125.9) rotate(-13)" opacity="0.34"/><path d="M-5.4 0 C-1.8 -1.0 1.4 -2.0 2.7 -2.0 C4.6 -2.0 5.4 -1.1 5.4 0 C5.4 1.1 4.6 2.0 2.7 2.0 C1.4 2.0 -1.8 1.0 -5.4 0Z" transform="translate(476.6 55.7) rotate(-27)" opacity="0.91"/><path d="M-5.1 0 C-1.7 -0.9 1.3 -1.8 2.6 -1.8 C4.3 -1.8 5.1 -1.0 5.1 0 C5.1 1.0 4.3 1.8 2.6 1.8 C1.3 1.8 -1.7 0.9 -5.1 0Z" transform="translate(262.8 215.9) rotate(133)" opacity="0.48"/><path d="M-7.3 0 C-2.4 -1.5 1.8 -3.0 3.7 -3.0 C6.2 -3.0 7.3 -1.6 7.3 0 C7.3 1.6 6.2 3.0 3.7 3.0 C1.8 3.0 -2.4 1.5 -7.3 0Z" transform="translate(22.1 276.6) rotate(155)" opacity="0.85"/><path d="M-4.4 0 C-1.5 -0.8 1.1 -1.5 2.2 -1.5 C3.7 -1.5 4.4 -0.8 4.4 0 C4.4 0.8 3.7 1.5 2.2 1.5 C1.1 1.5 -1.5 0.8 -4.4 0Z" transform="translate(382.2 144.3) rotate(5)" opacity="0.21"/><path d="M-4.0 0 C-1.3 -0.7 1.0 -1.4 2.0 -1.4 C3.4 -1.4 4.0 -0.7 4.0 0 C4.0 0.7 3.4 1.4 2.0 1.4 C1.0 1.4 -1.3 0.7 -4.0 0Z" transform="translate(69.7 119.5) rotate(-173)" opacity="0.82"/><path d="M-5.8 0 C-1.9 -1.2 1.4 -2.4 2.9 -2.4 C4.9 -2.4 5.8 -1.3 5.8 0 C5.8 1.3 4.9 2.4 2.9 2.4 C1.4 2.4 -1.9 1.2 -5.8 0Z" transform="translate(472.3 125.3) rotate(-3)" opacity="0.84"/><path d="M-6.1 0 C-2.0 -1.2 1.5 -2.4 3.1 -2.4 C5.2 -2.4 6.1 -1.3 6.1 0 C6.1 1.3 5.2 2.4 3.1 2.4 C1.5 2.4 -2.0 1.2 -6.1 0Z" transform="translate(474.2 166.3) rotate(11)" opacity="0.95"/><path d="M-3.9 0 C-1.3 -0.7 1.0 -1.4 2.0 -1.4 C3.3 -1.4 3.9 -0.8 3.9 0 C3.9 0.8 3.3 1.4 2.0 1.4 C1.0 1.4 -1.3 0.7 -3.9 0Z" transform="translate(225.4 34.8) rotate(-131)" opacity="0.80"/><path d="M-6.5 0 C-2.2 -1.3 1.6 -2.6 3.2 -2.6 C5.4 -2.6 6.5 -1.4 6.5 0 C6.5 1.4 5.4 2.6 3.2 2.6 C1.6 2.6 -2.2 1.3 -6.5 0Z" transform="translate(449.7 177.0) rotate(13)" opacity="0.62"/><path d="M-4.4 0 C-1.5 -1.0 1.1 -2.0 2.2 -2.0 C3.7 -2.0 4.4 -1.1 4.4 0 C4.4 1.1 3.7 2.0 2.2 2.0 C1.1 2.0 -1.5 1.0 -4.4 0Z" transform="translate(347.5 112.5) rotate(-49)" opacity="0.11"/><path d="M-5.0 0 C-1.7 -0.9 1.3 -1.7 2.5 -1.7 C4.2 -1.7 5.0 -0.9 5.0 0 C5.0 0.9 4.2 1.7 2.5 1.7 C1.3 1.7 -1.7 0.9 -5.0 0Z" transform="translate(31.6 227.6) rotate(162)" opacity="0.74"/><path d="M-4.7 0 C-1.6 -1.0 1.2 -2.0 2.3 -2.0 C3.9 -2.0 4.7 -1.1 4.7 0 C4.7 1.1 3.9 2.0 2.3 2.0 C1.2 2.0 -1.6 1.0 -4.7 0Z" transform="translate(440.7 109.4) rotate(-17)" opacity="0.59"/><path d="M-4.0 0 C-1.3 -0.8 1.0 -1.7 2.0 -1.7 C3.4 -1.7 4.0 -0.9 4.0 0 C4.0 0.9 3.4 1.7 2.0 1.7 C1.0 1.7 -1.3 0.8 -4.0 0Z" transform="translate(259.3 241.5) rotate(119)" opacity="0.56"/><path d="M-5.1 0 C-1.7 -1.1 1.3 -2.1 2.5 -2.1 C4.3 -2.1 5.1 -1.2 5.1 0 C5.1 1.2 4.3 2.1 2.5 2.1 C1.3 2.1 -1.7 1.1 -5.1 0Z" transform="translate(402.8 219.2) rotate(46)" opacity="0.52"/><path d="M-3.7 0 C-1.2 -0.7 0.9 -1.3 1.8 -1.3 C3.1 -1.3 3.7 -0.7 3.7 0 C3.7 0.7 3.1 1.3 1.8 1.3 C0.9 1.3 -1.2 0.7 -3.7 0Z" transform="translate(316.7 258.4) rotate(90)" opacity="0.56"/><path d="M-4.4 0 C-1.5 -0.9 1.1 -1.7 2.2 -1.7 C3.7 -1.7 4.4 -1.0 4.4 0 C4.4 1.0 3.7 1.7 2.2 1.7 C1.1 1.7 -1.5 0.9 -4.4 0Z" transform="translate(8.8 90.7) rotate(-169)" opacity="0.78"/><path d="M-4.3 0 C-1.4 -0.9 1.1 -1.7 2.1 -1.7 C3.6 -1.7 4.3 -0.9 4.3 0 C4.3 0.9 3.6 1.7 2.1 1.7 C1.1 1.7 -1.4 0.9 -4.3 0Z" transform="translate(38.2 128.9) rotate(-183)" opacity="0.78"/><path d="M-3.7 0 C-1.2 -0.8 0.9 -1.6 1.8 -1.6 C3.1 -1.6 3.7 -0.9 3.7 0 C3.7 0.9 3.1 1.6 1.8 1.6 C0.9 1.6 -1.2 0.8 -3.7 0Z" transform="translate(381.4 233.6) rotate(64)" opacity="0.52"/><path d="M-4.8 0 C-1.6 -0.8 1.2 -1.6 2.4 -1.6 C4.0 -1.6 4.8 -0.9 4.8 0 C4.8 0.9 4.0 1.6 2.4 1.6 C1.2 1.6 -1.6 0.8 -4.8 0Z" transform="translate(341.3 171.3) rotate(67)" opacity="0.10"/><path d="M-3.8 0 C-1.3 -0.8 0.9 -1.6 1.9 -1.6 C3.2 -1.6 3.8 -0.9 3.8 0 C3.8 0.9 3.2 1.6 1.9 1.6 C0.9 1.6 -1.3 0.8 -3.8 0Z" transform="translate(474.6 225.4) rotate(27)" opacity="0.77"/><path d="M-5.4 0 C-1.8 -1.0 1.4 -2.0 2.7 -2.0 C4.5 -2.0 5.4 -1.1 5.4 0 C5.4 1.1 4.5 2.0 2.7 2.0 C1.4 2.0 -1.8 1.0 -5.4 0Z" transform="translate(375.0 50.2) rotate(-56)" opacity="0.49"/><path d="M-3.8 0 C-1.3 -0.7 1.0 -1.4 1.9 -1.4 C3.2 -1.4 3.8 -0.8 3.8 0 C3.8 0.8 3.2 1.4 1.9 1.4 C1.0 1.4 -1.3 0.7 -3.8 0Z" transform="translate(248.5 140.3) rotate(180)" opacity="0.29"/><path d="M-7.1 0 C-2.4 -1.5 1.8 -3.0 3.6 -3.0 C6.0 -3.0 7.1 -1.6 7.1 0 C7.1 1.6 6.0 3.0 3.6 3.0 C1.8 3.0 -2.4 1.5 -7.1 0Z" transform="translate(74.6 318.5) rotate(145)" opacity="0.87"/><path d="M-4.7 0 C-1.6 -0.9 1.2 -1.8 2.3 -1.8 C3.9 -1.8 4.7 -1.0 4.7 0 C4.7 1.0 3.9 1.8 2.3 1.8 C1.2 1.8 -1.6 0.9 -4.7 0Z" transform="translate(219.1 7.9) rotate(-132)" opacity="0.77"/><path d="M-3.2 0 C-1.1 -0.7 0.8 -1.4 1.6 -1.4 C2.7 -1.4 3.2 -0.8 3.2 0 C3.2 0.8 2.7 1.4 1.6 1.4 C0.8 1.4 -1.1 0.7 -3.2 0Z" transform="translate(234.0 90.2) rotate(-154)" opacity="0.45"/><path d="M-6.2 0 C-2.1 -1.4 1.6 -2.7 3.1 -2.7 C5.2 -2.7 6.2 -1.5 6.2 0 C6.2 1.5 5.2 2.7 3.1 2.7 C1.6 2.7 -2.1 1.4 -6.2 0Z" transform="translate(372.3 263.8) rotate(66)" opacity="0.73"/><path d="M-6.5 0 C-2.2 -1.2 1.6 -2.4 3.2 -2.4 C5.4 -2.4 6.5 -1.3 6.5 0 C6.5 1.3 5.4 2.4 3.2 2.4 C1.6 2.4 -2.2 1.2 -6.5 0Z" transform="translate(265.9 263.6) rotate(117)" opacity="0.70"/><path d="M-6.5 0 C-2.2 -1.2 1.6 -2.4 3.2 -2.4 C5.4 -2.4 6.5 -1.3 6.5 0 C6.5 1.3 5.4 2.4 3.2 2.4 C1.6 2.4 -2.2 1.2 -6.5 0Z" transform="translate(402.3 34.5) rotate(-52)" opacity="0.67"/><path d="M-5.0 0 C-1.7 -1.0 1.2 -1.9 2.5 -1.9 C4.2 -1.9 5.0 -1.0 5.0 0 C5.0 1.0 4.2 1.9 2.5 1.9 C1.2 1.9 -1.7 1.0 -5.0 0Z" transform="translate(349.9 222.4) rotate(77)" opacity="0.46"/><path d="M-5.9 0 C-2.0 -1.1 1.5 -2.2 3.0 -2.2 C5.0 -2.2 5.9 -1.2 5.9 0 C5.9 1.2 5.0 2.2 3.0 2.2 C1.5 2.2 -2.0 1.1 -5.9 0Z" transform="translate(316.4 -5.5) rotate(-96)" opacity="0.85"/><path d="M-3.1 0 C-1.0 -0.6 0.8 -1.2 1.5 -1.2 C2.6 -1.2 3.1 -0.7 3.1 0 C3.1 0.7 2.6 1.2 1.5 1.2 C0.8 1.2 -1.0 0.6 -3.1 0Z" transform="translate(365.6 166.9) rotate(33)" opacity="0.14"/><path d="M-7.5 0 C-2.5 -1.5 1.9 -3.1 3.7 -3.1 C6.3 -3.1 7.5 -1.7 7.5 0 C7.5 1.7 6.3 3.1 3.7 3.1 C1.9 3.1 -2.5 1.5 -7.5 0Z" transform="translate(162.1 0.0) rotate(-142)" opacity="0.79"/><path d="M-5.7 0 C-1.9 -1.0 1.4 -1.9 2.9 -1.9 C4.8 -1.9 5.7 -1.1 5.7 0 C5.7 1.1 4.8 1.9 2.9 1.9 C1.4 1.9 -1.9 1.0 -5.7 0Z" transform="translate(407.7 55.2) rotate(-41)" opacity="0.56"/><path d="M-2.9 0 C-1.0 -0.6 0.7 -1.2 1.5 -1.2 C2.4 -1.2 2.9 -0.6 2.9 0 C2.9 0.6 2.4 1.2 1.5 1.2 C0.7 1.2 -1.0 0.6 -2.9 0Z" transform="translate(279.4 84.8) rotate(-130)" opacity="0.29"/><path d="M-6.2 0 C-2.1 -1.1 1.6 -2.2 3.1 -2.2 C5.2 -2.2 6.2 -1.2 6.2 0 C6.2 1.2 5.2 2.2 3.1 2.2 C1.6 2.2 -2.1 1.1 -6.2 0Z" transform="translate(418.5 247.3) rotate(45)" opacity="0.70"/><path d="M-6.0 0 C-2.0 -1.3 1.5 -2.5 3.0 -2.5 C5.0 -2.5 6.0 -1.4 6.0 0 C6.0 1.4 5.0 2.5 3.0 2.5 C1.5 2.5 -2.0 1.3 -6.0 0Z" transform="translate(490.5 140.5) rotate(3)" opacity="0.95"/><path d="M-4.7 0 C-1.6 -1.0 1.2 -2.0 2.3 -2.0 C3.9 -2.0 4.7 -1.1 4.7 0 C4.7 1.1 3.9 2.0 2.3 2.0 C1.2 2.0 -1.6 1.0 -4.7 0Z" transform="translate(217.1 149.8) rotate(177)" opacity="0.48"/><path d="M-3.9 0 C-1.3 -0.9 1.0 -1.7 2.0 -1.7 C3.3 -1.7 3.9 -1.0 3.9 0 C3.9 1.0 3.3 1.7 2.0 1.7 C1.0 1.7 -1.3 0.9 -3.9 0Z" transform="translate(171.8 177.6) rotate(164)" opacity="0.77"/><path d="M-7.7 0 C-2.6 -1.3 1.9 -2.6 3.8 -2.6 C6.4 -2.6 7.7 -1.4 7.7 0 C7.7 1.4 6.4 2.6 3.8 2.6 C1.9 2.6 -2.6 1.3 -7.7 0Z" transform="translate(163.9 309.5) rotate(128)" opacity="0.91"/><path d="M-3.6 0 C-1.2 -0.8 0.9 -1.5 1.8 -1.5 C3.1 -1.5 3.6 -0.8 3.6 0 C3.6 0.8 3.1 1.5 1.8 1.5 C0.9 1.5 -1.2 0.8 -3.6 0Z" transform="translate(177.5 121.4) rotate(-178)" opacity="0.93"/><path d="M-3.5 0 C-1.2 -0.6 0.9 -1.3 1.7 -1.3 C2.9 -1.3 3.5 -0.7 3.5 0 C3.5 0.7 2.9 1.3 1.7 1.3 C0.9 1.3 -1.2 0.6 -3.5 0Z" transform="translate(372.6 213.2) rotate(57)" opacity="0.39"/><path d="M-5.8 0 C-1.9 -1.0 1.5 -1.9 2.9 -1.9 C4.9 -1.9 5.8 -1.1 5.8 0 C5.8 1.1 4.9 1.9 2.9 1.9 C1.5 1.9 -1.9 1.0 -5.8 0Z" transform="translate(470.7 95.8) rotate(-12)" opacity="0.76"/><path d="M-4.4 0 C-1.5 -1.0 1.1 -2.0 2.2 -2.0 C3.7 -2.0 4.4 -1.1 4.4 0 C4.4 1.1 3.7 2.0 2.2 2.0 C1.1 2.0 -1.5 1.0 -4.4 0Z" transform="translate(319.3 204.9) rotate(96)" opacity="0.29"/><path d="M-3.5 0 C-1.2 -0.8 0.9 -1.5 1.7 -1.5 C2.9 -1.5 3.5 -0.8 3.5 0 C3.5 0.8 2.9 1.5 1.7 1.5 C0.9 1.5 -1.2 0.8 -3.5 0Z" transform="translate(248.8 4.2) rotate(-122)" opacity="0.78"/><path d="M-4.6 0 C-1.5 -1.0 1.2 -2.1 2.3 -2.1 C3.9 -2.1 4.6 -1.1 4.6 0 C4.6 1.1 3.9 2.1 2.3 2.1 C1.2 2.1 -1.5 1.0 -4.6 0Z" transform="translate(351.3 -5.3) rotate(-78)" opacity="0.85"/><path d="M-4.0 0 C-1.3 -0.7 1.0 -1.3 2.0 -1.3 C3.4 -1.3 4.0 -0.7 4.0 0 C4.0 0.7 3.4 1.3 2.0 1.3 C1.0 1.3 -1.3 0.7 -4.0 0Z" transform="translate(412.3 98.5) rotate(-29)" opacity="0.53"/><path d="M-8.1 0 C-2.7 -1.8 2.0 -3.5 4.0 -3.5 C6.8 -3.5 8.1 -1.9 8.1 0 C8.1 1.9 6.8 3.5 4.0 3.5 C2.0 3.5 -2.7 1.8 -8.1 0Z" transform="translate(2.8 193.5) rotate(171)" opacity="0.78"/><path d="M-4.3 0 C-1.4 -0.8 1.1 -1.5 2.1 -1.5 C3.6 -1.5 4.3 -0.8 4.3 0 C4.3 0.8 3.6 1.5 2.1 1.5 C1.1 1.5 -1.4 0.8 -4.3 0Z" transform="translate(420.8 18.7) rotate(-49)" opacity="0.87"/><path d="M-7.6 0 C-2.5 -1.4 1.9 -2.8 3.8 -2.8 C6.4 -2.8 7.6 -1.5 7.6 0 C7.6 1.5 6.4 2.8 3.8 2.8 C1.9 2.8 -2.5 1.4 -7.6 0Z" transform="translate(86.0 260.9) rotate(154)" opacity="0.85"/><path d="M-6.1 0 C-2.0 -1.3 1.5 -2.6 3.1 -2.6 C5.1 -2.6 6.1 -1.4 6.1 0 C6.1 1.4 5.1 2.6 3.1 2.6 C1.5 2.6 -2.0 1.3 -6.1 0Z" transform="translate(379.2 311.5) rotate(69)" opacity="0.83"/><path d="M-5.9 0 C-2.0 -1.3 1.5 -2.6 2.9 -2.6 C4.9 -2.6 5.9 -1.4 5.9 0 C5.9 1.4 4.9 2.6 2.9 2.6 C1.5 2.6 -2.0 1.3 -5.9 0Z" transform="translate(152.2 201.0) rotate(163)" opacity="0.71"/><path d="M-6.2 0 C-2.1 -1.4 1.6 -2.7 3.1 -2.7 C5.2 -2.7 6.2 -1.5 6.2 0 C6.2 1.5 5.2 2.7 3.1 2.7 C1.6 2.7 -2.1 1.4 -6.2 0Z" transform="translate(129.2 170.4) rotate(170)" opacity="0.85"/><path d="M-3.6 0 C-1.2 -0.8 0.9 -1.5 1.8 -1.5 C3.0 -1.5 3.6 -0.8 3.6 0 C3.6 0.8 3.0 1.5 1.8 1.5 C0.9 1.5 -1.2 0.8 -3.6 0Z" transform="translate(344.2 283.7) rotate(82)" opacity="0.72"/><path d="M-6.5 0 C-2.2 -1.3 1.6 -2.7 3.3 -2.7 C5.5 -2.7 6.5 -1.5 6.5 0 C6.5 1.5 5.5 2.7 3.3 2.7 C1.6 2.7 -2.2 1.3 -6.5 0Z" transform="translate(160.5 143.8) rotate(180)" opacity="0.83"/><path d="M-4.0 0 C-1.3 -0.8 1.0 -1.5 2.0 -1.5 C3.4 -1.5 4.0 -0.8 4.0 0 C4.0 0.8 3.4 1.5 2.0 1.5 C1.0 1.5 -1.3 0.8 -4.0 0Z" transform="translate(449.7 271.2) rotate(48)" opacity="0.76"/><path d="M-5.5 0 C-1.8 -1.2 1.4 -2.4 2.8 -2.4 C4.6 -2.4 5.5 -1.3 5.5 0 C5.5 1.3 4.6 2.4 2.8 2.4 C1.4 2.4 -1.8 1.2 -5.5 0Z" transform="translate(428.8 -3.3) rotate(-56)" opacity="0.87"/><path d="M-4.0 0 C-1.3 -0.8 1.0 -1.6 2.0 -1.6 C3.3 -1.6 4.0 -0.9 4.0 0 C4.0 0.9 3.3 1.6 2.0 1.6 C1.0 1.6 -1.3 0.8 -4.0 0Z" transform="translate(330.3 83.8) rotate(-83)" opacity="0.15"/><path d="M-4.0 0 C-1.3 -0.8 1.0 -1.5 2.0 -1.5 C3.4 -1.5 4.0 -0.8 4.0 0 C4.0 0.8 3.4 1.5 2.0 1.5 C1.0 1.5 -1.3 0.8 -4.0 0Z" transform="translate(131.0 5.4) rotate(-143)" opacity="0.84"/><path d="M-4.5 0 C-1.5 -0.7 1.1 -1.5 2.2 -1.5 C3.7 -1.5 4.5 -0.8 4.5 0 C4.5 0.8 3.7 1.5 2.2 1.5 C1.1 1.5 -1.5 0.7 -4.5 0Z" transform="translate(458.6 142.9) rotate(-1)" opacity="0.64"/><path d="M-6.5 0 C-2.2 -1.1 1.6 -2.3 3.3 -2.3 C5.5 -2.3 6.5 -1.3 6.5 0 C6.5 1.3 5.5 2.3 3.3 2.3 C1.6 2.3 -2.2 1.1 -6.5 0Z" transform="translate(445.0 203.1) rotate(28)" opacity="0.85"/><path d="M-4.1 0 C-1.4 -0.8 1.0 -1.7 2.0 -1.7 C3.4 -1.7 4.1 -0.9 4.1 0 C4.1 0.9 3.4 1.7 2.0 1.7 C1.0 1.7 -1.4 0.8 -4.1 0Z" transform="translate(179.8 62.8) rotate(-157)" opacity="0.87"/><path d="M-4.9 0 C-1.6 -0.9 1.2 -1.9 2.4 -1.9 C4.1 -1.9 4.9 -1.0 4.9 0 C4.9 1.0 4.1 1.9 2.4 1.9 C1.2 1.9 -1.6 0.9 -4.9 0Z" transform="translate(396.9 195.3) rotate(39)" opacity="0.39"/><path d="M-4.1 0 C-1.4 -0.8 1.0 -1.5 2.1 -1.5 C3.5 -1.5 4.1 -0.8 4.1 0 C4.1 0.8 3.5 1.5 2.1 1.5 C1.0 1.5 -1.4 0.8 -4.1 0Z" transform="translate(301.7 276.8) rotate(100)" opacity="0.74"/><path d="M-6.2 0 C-2.1 -1.1 1.5 -2.2 3.1 -2.2 C5.2 -2.2 6.2 -1.2 6.2 0 C6.2 1.2 5.2 2.2 3.1 2.2 C1.5 2.2 -2.1 1.1 -6.2 0Z" transform="translate(202.9 205.8) rotate(155)" opacity="0.86"/><path d="M-5.8 0 C-1.9 -1.1 1.4 -2.2 2.9 -2.2 C4.8 -2.2 5.8 -1.2 5.8 0 C5.8 1.2 4.8 2.2 2.9 2.2 C1.4 2.2 -1.9 1.1 -5.8 0Z" transform="translate(403.5 274.1) rotate(63)" opacity="0.86"/><path d="M-3.0 0 C-1.0 -0.6 0.8 -1.1 1.5 -1.1 C2.6 -1.1 3.0 -0.6 3.0 0 C3.0 0.6 2.6 1.1 1.5 1.1 C0.8 1.1 -1.0 0.6 -3.0 0Z" transform="translate(278.5 115.7) rotate(-152)" opacity="0.15"/><path d="M-4.1 0 C-1.4 -0.8 1.0 -1.5 2.1 -1.5 C3.5 -1.5 4.1 -0.8 4.1 0 C4.1 0.8 3.5 1.5 2.1 1.5 C1.0 1.5 -1.4 0.8 -4.1 0Z" transform="translate(88.1 90.0) rotate(-165)" opacity="0.72"/><path d="M-4.0 0 C-1.3 -0.8 1.0 -1.5 2.0 -1.5 C3.4 -1.5 4.0 -0.8 4.0 0 C4.0 0.8 3.4 1.5 2.0 1.5 C1.0 1.5 -1.3 0.8 -4.0 0Z" transform="translate(485.4 312.4) rotate(43)" opacity="0.95"/><path d="M-3.4 0 C-1.1 -0.8 0.9 -1.5 1.7 -1.5 C2.9 -1.5 3.4 -0.8 3.4 0 C3.4 0.8 2.9 1.5 1.7 1.5 C0.9 1.5 -1.1 0.8 -3.4 0Z" transform="translate(200.3 255.6) rotate(134)" opacity="0.78"/><path d="M-4.3 0 C-1.4 -0.9 1.1 -1.8 2.2 -1.8 C3.6 -1.8 4.3 -1.0 4.3 0 C4.3 1.0 3.6 1.8 2.2 1.8 C1.1 1.8 -1.4 0.9 -4.3 0Z" transform="translate(443.8 72.9) rotate(-25)" opacity="0.67"/><path d="M-4.8 0 C-1.6 -0.9 1.2 -1.9 2.4 -1.9 C4.0 -1.9 4.8 -1.0 4.8 0 C4.8 1.0 4.0 1.9 2.4 1.9 C1.2 1.9 -1.6 0.9 -4.8 0Z" transform="translate(270.9 19.5) rotate(-109)" opacity="0.73"/><path d="M-4.6 0 C-1.5 -0.9 1.2 -1.8 2.3 -1.8 C3.9 -1.8 4.6 -1.0 4.6 0 C4.6 1.0 3.9 1.8 2.3 1.8 C1.2 1.8 -1.5 0.9 -4.6 0Z" transform="translate(423.6 280.1) rotate(54)" opacity="0.86"/><path d="M-4.6 0 C-1.5 -0.9 1.1 -1.7 2.3 -1.7 C3.8 -1.7 4.6 -0.9 4.6 0 C4.6 0.9 3.8 1.7 2.3 1.7 C1.1 1.7 -1.5 0.9 -4.6 0Z" transform="translate(130.1 118.5) rotate(-174)" opacity="0.87"/><path d="M-5.0 0 C-1.7 -0.9 1.2 -1.9 2.5 -1.9 C4.2 -1.9 5.0 -1.0 5.0 0 C5.0 1.0 4.2 1.9 2.5 1.9 C1.2 1.9 -1.7 0.9 -5.0 0Z" transform="translate(163.1 221.6) rotate(152)" opacity="0.83"/><path d="M-4.6 0 C-1.5 -1.0 1.1 -2.0 2.3 -2.0 C3.8 -2.0 4.6 -1.1 4.6 0 C4.6 1.1 3.8 2.0 2.3 2.0 C1.1 2.0 -1.5 1.0 -4.6 0Z" transform="translate(319.7 291.7) rotate(88)" opacity="0.91"/><path d="M-5.3 0 C-1.8 -1.1 1.3 -2.3 2.7 -2.3 C4.5 -2.3 5.3 -1.3 5.3 0 C5.3 1.3 4.5 2.3 2.7 2.3 C1.3 2.3 -1.8 1.1 -5.3 0Z" transform="translate(202.4 83.6) rotate(-152)" opacity="0.82"/><path d="M-6.6 0 C-2.2 -1.3 1.6 -2.5 3.3 -2.5 C5.5 -2.5 6.6 -1.4 6.6 0 C6.6 1.4 5.5 2.5 3.3 2.5 C1.6 2.5 -2.2 1.3 -6.6 0Z" transform="translate(108.1 146.3) rotate(182)" opacity="0.84"/><path d="M-6.8 0 C-2.3 -1.2 1.7 -2.5 3.4 -2.5 C5.7 -2.5 6.8 -1.4 6.8 0 C6.8 1.4 5.7 2.5 3.4 2.5 C1.7 2.5 -2.3 1.2 -6.8 0Z" transform="translate(116.7 229.4) rotate(153)" opacity="0.94"/><path d="M-4.7 0 C-1.6 -0.9 1.2 -1.7 2.3 -1.7 C3.9 -1.7 4.7 -0.9 4.7 0 C4.7 0.9 3.9 1.7 2.3 1.7 C1.2 1.7 -1.6 0.9 -4.7 0Z" transform="translate(282.0 223.2) rotate(116)" opacity="0.42"/><path d="M-5.5 0 C-1.8 -1.0 1.4 -2.0 2.7 -2.0 C4.6 -2.0 5.5 -1.1 5.5 0 C5.5 1.1 4.6 2.0 2.7 2.0 C1.4 2.0 -1.8 1.0 -5.5 0Z" transform="translate(245.0 224.5) rotate(137)" opacity="0.57"/><path d="M-3.7 0 C-1.2 -0.7 0.9 -1.4 1.9 -1.4 C3.1 -1.4 3.7 -0.7 3.7 0 C3.7 0.7 3.1 1.4 1.9 1.4 C0.9 1.4 -1.2 0.7 -3.7 0Z" transform="translate(403.7 -2.1) rotate(-56)" opacity="0.80"/><path d="M-4.1 0 C-1.4 -0.8 1.0 -1.7 2.1 -1.7 C3.5 -1.7 4.1 -0.9 4.1 0 C4.1 0.9 3.5 1.7 2.1 1.7 C1.0 1.7 -1.4 0.8 -4.1 0Z" transform="translate(77.0 141.9) rotate(181)" opacity="0.82"/><path d="M-6.8 0 C-2.3 -1.2 1.7 -2.5 3.4 -2.5 C5.7 -2.5 6.8 -1.4 6.8 0 C6.8 1.4 5.7 2.5 3.4 2.5 C1.7 2.5 -2.3 1.2 -6.8 0Z" transform="translate(316.1 323.3) rotate(96)" opacity="0.76"/><path d="M-5.1 0 C-1.7 -1.0 1.3 -2.1 2.6 -2.1 C4.3 -2.1 5.1 -1.1 5.1 0 C5.1 1.1 4.3 2.1 2.6 2.1 C1.3 2.1 -1.7 1.0 -5.1 0Z" transform="translate(137.9 94.7) rotate(-167)" opacity="0.75"/><path d="M-4.6 0 C-1.5 -1.0 1.1 -2.0 2.3 -2.0 C3.8 -2.0 4.6 -1.1 4.6 0 C4.6 1.1 3.8 2.0 2.3 2.0 C1.1 2.0 -1.5 1.0 -4.6 0Z" transform="translate(375.9 88.7) rotate(-48)" opacity="0.29"/><path d="M-4.1 0 C-1.4 -0.8 1.0 -1.7 2.1 -1.7 C3.5 -1.7 4.1 -0.9 4.1 0 C4.1 0.9 3.5 1.7 2.1 1.7 C1.0 1.7 -1.4 0.8 -4.1 0Z" transform="translate(272.5 178.5) rotate(139)" opacity="0.24"/><path d="M-5.3 0 C-1.8 -1.2 1.3 -2.4 2.7 -2.4 C4.5 -2.4 5.3 -1.3 5.3 0 C5.3 1.3 4.5 2.4 2.7 2.4 C1.3 2.4 -1.8 1.2 -5.3 0Z" transform="translate(234.6 59.6) rotate(-143)" opacity="0.66"/><path d="M-5.6 0 C-1.9 -1.2 1.4 -2.4 2.8 -2.4 C4.7 -2.4 5.6 -1.3 5.6 0 C5.6 1.3 4.7 2.4 2.8 2.4 C1.4 2.4 -1.9 1.2 -5.6 0Z" transform="translate(238.0 249.4) rotate(132)" opacity="0.75"/><path d="M-7.5 0 C-2.5 -1.4 1.9 -2.9 3.7 -2.9 C6.3 -2.9 7.5 -1.6 7.5 0 C7.5 1.6 6.3 2.9 3.7 2.9 C1.9 2.9 -2.5 1.4 -7.5 0Z" transform="translate(429.5 320.8) rotate(55)" opacity="0.75"/><path d="M-5.8 0 C-1.9 -1.0 1.4 -1.9 2.9 -1.9 C4.9 -1.9 5.8 -1.1 5.8 0 C5.8 1.1 4.9 1.9 2.9 1.9 C1.4 1.9 -1.9 1.0 -5.8 0Z" transform="translate(335.9 263.1) rotate(86)" opacity="0.67"/><path d="M-7.2 0 C-2.4 -1.6 1.8 -3.2 3.6 -3.2 C6.1 -3.2 7.2 -1.8 7.2 0 C7.2 1.8 6.1 3.2 3.6 3.2 C1.8 3.2 -2.4 1.6 -7.2 0Z" transform="translate(117.9 297.4) rotate(144)" opacity="0.81"/><path d="M-6.8 0 C-2.3 -1.2 1.7 -2.4 3.4 -2.4 C5.7 -2.4 6.8 -1.3 6.8 0 C6.8 1.3 5.7 2.4 3.4 2.4 C1.7 2.4 -2.3 1.2 -6.8 0Z" transform="translate(145.3 47.9) rotate(-155)" opacity="0.94"/><path d="M-4.3 0 C-1.4 -0.8 1.1 -1.5 2.2 -1.5 C3.6 -1.5 4.3 -0.8 4.3 0 C4.3 0.8 3.6 1.5 2.2 1.5 C1.1 1.5 -1.4 0.8 -4.3 0Z" transform="translate(248.5 275.2) rotate(120)" opacity="0.93"/><path d="M-6.7 0 C-2.2 -1.2 1.7 -2.4 3.3 -2.4 C5.6 -2.4 6.7 -1.3 6.7 0 C6.7 1.3 5.6 2.4 3.3 2.4 C1.7 2.4 -2.2 1.2 -6.7 0Z" transform="translate(467.7 247.0) rotate(40)" opacity="0.77"/><path d="M-4.4 0 C-1.5 -0.9 1.1 -1.8 2.2 -1.8 C3.7 -1.8 4.4 -1.0 4.4 0 C4.4 1.0 3.7 1.8 2.2 1.8 C1.1 1.8 -1.5 0.9 -4.4 0Z" transform="translate(197.0 2.8) rotate(-133)" opacity="0.88"/><path d="M-4.9 0 C-1.6 -0.9 1.2 -1.8 2.4 -1.8 C4.1 -1.8 4.9 -1.0 4.9 0 C4.9 1.0 4.1 1.8 2.4 1.8 C1.2 1.8 -1.6 0.9 -4.9 0Z" transform="translate(45.2 305.3) rotate(151)" opacity="0.86"/><path d="M-6.9 0 C-2.3 -1.4 1.7 -2.8 3.5 -2.8 C5.8 -2.8 6.9 -1.5 6.9 0 C6.9 1.5 5.8 2.8 3.5 2.8 C1.7 2.8 -2.3 1.4 -6.9 0Z" transform="translate(55.6 158.3) rotate(178)" opacity="0.82"/><path d="M-5.6 0 C-1.9 -1.0 1.4 -2.0 2.8 -2.0 C4.7 -2.0 5.6 -1.1 5.6 0 C5.6 1.1 4.7 2.0 2.8 2.0 C1.4 2.0 -1.9 1.0 -5.6 0Z" transform="translate(416.8 302.3) rotate(57)" opacity="0.85"/><path d="M-6.3 0 C-2.1 -1.3 1.6 -2.5 3.1 -2.5 C5.3 -2.5 6.3 -1.4 6.3 0 C6.3 1.4 5.3 2.5 3.1 2.5 C1.6 2.5 -2.1 1.3 -6.3 0Z" transform="translate(370.3 1.9) rotate(-68)" opacity="0.78"/><path d="M-4.1 0 C-1.4 -0.9 1.0 -1.7 2.1 -1.7 C3.5 -1.7 4.1 -0.9 4.1 0 C4.1 0.9 3.5 1.7 2.1 1.7 C1.0 1.7 -1.4 0.9 -4.1 0Z" transform="translate(469.7 35.1) rotate(-36)" opacity="0.92"/><path d="M-5.3 0 C-1.8 -1.1 1.3 -2.1 2.7 -2.1 C4.5 -2.1 5.3 -1.2 5.3 0 C5.3 1.2 4.5 2.1 2.7 2.1 C1.3 2.1 -1.8 1.1 -5.3 0Z" transform="translate(377.3 186.5) rotate(40)" opacity="0.28"/><path d="M-3.6 0 C-1.2 -0.6 0.9 -1.2 1.8 -1.2 C3.0 -1.2 3.6 -0.7 3.6 0 C3.6 0.7 3.0 1.2 1.8 1.2 C0.9 1.2 -1.2 0.6 -3.6 0Z" transform="translate(248.0 114.2) rotate(-158)" opacity="0.39"/><path d="M-4.1 0 C-1.4 -0.8 1.0 -1.6 2.0 -1.6 C3.4 -1.6 4.1 -0.9 4.1 0 C4.1 0.9 3.4 1.6 2.0 1.6 C1.0 1.6 -1.4 0.8 -4.1 0Z" transform="translate(253.5 322.9) rotate(113)" opacity="0.73"/><path d="M-6.2 0 C-2.1 -1.1 1.6 -2.1 3.1 -2.1 C5.2 -2.1 6.2 -1.2 6.2 0 C6.2 1.2 5.2 2.1 3.1 2.1 C1.6 2.1 -2.1 1.1 -6.2 0Z" transform="translate(463.7 290.0) rotate(48)" opacity="0.86"/><path d="M-5.8 0 C-1.9 -1.3 1.5 -2.5 2.9 -2.5 C4.9 -2.5 5.8 -1.4 5.8 0 C5.8 1.4 4.9 2.5 2.9 2.5 C1.5 2.5 -1.9 1.3 -5.8 0Z" transform="translate(196.9 290.5) rotate(126)" opacity="0.75"/><path d="M-3.2 0 C-1.1 -0.6 0.8 -1.1 1.6 -1.1 C2.7 -1.1 3.2 -0.6 3.2 0 C3.2 0.6 2.7 1.1 1.6 1.1 C0.8 1.1 -1.1 0.6 -3.2 0Z" transform="translate(253.4 79.9) rotate(-137)" opacity="0.39"/><path d="M-4.2 0 C-1.4 -0.8 1.1 -1.6 2.1 -1.6 C3.6 -1.6 4.2 -0.9 4.2 0 C4.2 0.9 3.6 1.6 2.1 1.6 C1.1 1.6 -1.4 0.8 -4.2 0Z" transform="translate(346.2 95.0) rotate(-62)" opacity="0.14"/><path d="M-5.3 0 C-1.8 -1.0 1.3 -2.0 2.6 -2.0 C4.4 -2.0 5.3 -1.1 5.3 0 C5.3 1.1 4.4 2.0 2.6 2.0 C1.3 2.0 -1.8 1.0 -5.3 0Z" transform="translate(313.8 72.0) rotate(-95)" opacity="0.23"/><path d="M-5.5 0 C-1.8 -1.0 1.4 -2.0 2.8 -2.0 C4.6 -2.0 5.5 -1.1 5.5 0 C5.5 1.1 4.6 2.0 2.8 2.0 C1.4 2.0 -1.8 1.0 -5.5 0Z" transform="translate(201.3 181.4) rotate(156)" opacity="0.62"/><path d="M-6.3 0 C-2.1 -1.1 1.6 -2.2 3.2 -2.2 C5.3 -2.2 6.3 -1.2 6.3 0 C6.3 1.2 5.3 2.2 3.2 2.2 C1.6 2.2 -2.1 1.1 -6.3 0Z" transform="translate(479.5 11.9) rotate(-42)" opacity="0.73"/><path d="M-5.3 0 C-1.8 -1.0 1.3 -2.0 2.6 -2.0 C4.4 -2.0 5.3 -1.1 5.3 0 C5.3 1.1 4.4 2.0 2.6 2.0 C1.3 2.0 -1.8 1.0 -5.3 0Z" transform="translate(267.7 149.7) rotate(168)" opacity="0.21"/><path d="M-4.3 0 C-1.4 -0.9 1.1 -1.7 2.1 -1.7 C3.6 -1.7 4.3 -0.9 4.3 0 C4.3 0.9 3.6 1.7 2.1 1.7 C1.1 1.7 -1.4 0.9 -4.3 0Z" transform="translate(271.3 309.7) rotate(109)" opacity="0.91"/><path d="M-5.8 0 C-1.9 -1.0 1.4 -1.9 2.9 -1.9 C4.9 -1.9 5.8 -1.1 5.8 0 C5.8 1.1 4.9 1.9 2.9 1.9 C1.4 1.9 -1.9 1.0 -5.8 0Z" transform="translate(304.7 240.3) rotate(96)" opacity="0.51"/><path d="M-6.5 0 C-2.2 -1.3 1.6 -2.5 3.2 -2.5 C5.4 -2.5 6.5 -1.4 6.5 0 C6.5 1.4 5.4 2.5 3.2 2.5 C1.6 2.5 -2.2 1.3 -6.5 0Z" transform="translate(20.8 -5.0) rotate(-154)" opacity="0.82"/><path d="M-7.0 0 C-2.3 -1.4 1.7 -2.9 3.5 -2.9 C5.8 -2.9 7.0 -1.6 7.0 0 C7.0 1.6 5.8 2.9 3.5 2.9 C1.7 2.9 -2.3 1.4 -7.0 0Z" transform="translate(492.0 111.9) rotate(-12)" opacity="0.84"/><path d="M-4.9 0 C-1.6 -0.8 1.2 -1.6 2.4 -1.6 C4.1 -1.6 4.9 -0.9 4.9 0 C4.9 0.9 4.1 1.6 2.4 1.6 C1.2 1.6 -1.6 0.8 -4.9 0Z" transform="translate(328.1 106.0) rotate(-82)" opacity="0.10"/><path d="M-4.3 0 C-1.4 -0.9 1.1 -1.8 2.2 -1.8 C3.6 -1.8 4.3 -1.0 4.3 0 C4.3 1.0 3.6 1.8 2.2 1.8 C1.1 1.8 -1.4 0.9 -4.3 0Z" transform="translate(466.6 206.3) rotate(30)" opacity="0.92"/><path d="M-4.8 0 C-1.6 -1.0 1.2 -2.0 2.4 -2.0 C4.1 -2.0 4.8 -1.1 4.8 0 C4.8 1.1 4.1 2.0 2.4 2.0 C1.2 2.0 -1.6 1.0 -4.8 0Z" transform="translate(149.8 21.4) rotate(-142)" opacity="0.78"/><path d="M-6.8 0 C-2.3 -1.5 1.7 -2.9 3.4 -2.9 C5.7 -2.9 6.8 -1.6 6.8 0 C6.8 1.6 5.7 2.9 3.4 2.9 C1.7 2.9 -2.3 1.5 -6.8 0Z" transform="translate(18.6 146.9) rotate(179)" opacity="0.94"/><path d="M-3.5 0 C-1.2 -0.8 0.9 -1.5 1.7 -1.5 C2.9 -1.5 3.5 -0.8 3.5 0 C3.5 0.8 2.9 1.5 1.7 1.5 C0.9 1.5 -1.2 0.8 -3.5 0Z" transform="translate(235.7 167.0) rotate(160)" opacity="0.46"/><path d="M-4.0 0 C-1.3 -0.7 1.0 -1.4 2.0 -1.4 C3.3 -1.4 4.0 -0.8 4.0 0 C4.0 0.8 3.3 1.4 2.0 1.4 C1.0 1.4 -1.3 0.7 -4.0 0Z" transform="translate(130.1 209.5) rotate(156)" opacity="0.79"/><path d="M-3.8 0 C-1.3 -0.7 1.0 -1.4 1.9 -1.4 C3.2 -1.4 3.8 -0.8 3.8 0 C3.8 0.8 3.2 1.4 1.9 1.4 C1.0 1.4 -1.3 0.7 -3.8 0Z" transform="translate(447.4 223.5) rotate(31)" opacity="0.82"/><path d="M-3.9 0 C-1.3 -0.7 1.0 -1.4 2.0 -1.4 C3.3 -1.4 3.9 -0.7 3.9 0 C3.9 0.7 3.3 1.4 2.0 1.4 C1.0 1.4 -1.3 0.7 -3.9 0Z" transform="translate(420.6 136.1) rotate(1)" opacity="0.41"/><path d="M-5.9 0 C-2.0 -1.2 1.5 -2.4 3.0 -2.4 C5.0 -2.4 5.9 -1.3 5.9 0 C5.9 1.3 5.0 2.4 3.0 2.4 C1.5 2.4 -2.0 1.2 -5.9 0Z" transform="translate(179.7 21.0) rotate(-143)" opacity="0.92"/><path d="M-3.5 0 C-1.2 -0.6 0.9 -1.3 1.7 -1.3 C2.9 -1.3 3.5 -0.7 3.5 0 C3.5 0.7 2.9 1.3 1.7 1.3 C0.9 1.3 -1.2 0.6 -3.5 0Z" transform="translate(401.5 177.0) rotate(30)" opacity="0.35"/><path d="M-5.6 0 C-1.9 -1.0 1.4 -2.0 2.8 -2.0 C4.7 -2.0 5.6 -1.1 5.6 0 C5.6 1.1 4.7 2.0 2.8 2.0 C1.4 2.0 -1.9 1.0 -5.6 0Z" transform="translate(302.1 217.5) rotate(102)" opacity="0.42"/><path d="M-5.7 0 C-1.9 -1.2 1.4 -2.5 2.9 -2.5 C4.8 -2.5 5.7 -1.4 5.7 0 C5.7 1.4 4.8 2.5 2.9 2.5 C1.4 2.5 -1.9 1.2 -5.7 0Z" transform="translate(303.6 48.1) rotate(-107)" opacity="0.44"/><path d="M-4.4 0 C-1.5 -0.8 1.1 -1.5 2.2 -1.5 C3.7 -1.5 4.4 -0.8 4.4 0 C4.4 0.8 3.7 1.5 2.2 1.5 C1.1 1.5 -1.5 0.8 -4.4 0Z" transform="translate(394.2 250.8) rotate(58)" opacity="0.72"/><path d="M-5.0 0 C-1.7 -0.9 1.3 -1.8 2.5 -1.8 C4.2 -1.8 5.0 -1.0 5.0 0 C5.0 1.0 4.2 1.8 2.5 1.8 C1.3 1.8 -1.7 0.9 -5.0 0Z" transform="translate(100.4 319.4) rotate(143)" opacity="0.81"/><path d="M-4.1 0 C-1.4 -0.7 1.0 -1.4 2.0 -1.4 C3.4 -1.4 4.1 -0.8 4.1 0 C4.1 0.8 3.4 1.4 2.0 1.4 C1.0 1.4 -1.4 0.7 -4.1 0Z" transform="translate(43.8 36.6) rotate(-162)" opacity="0.77"/><path d="M-6.2 0 C-2.1 -1.4 1.5 -2.7 3.1 -2.7 C5.2 -2.7 6.2 -1.5 6.2 0 C6.2 1.5 5.2 2.7 3.1 2.7 C1.5 2.7 -2.1 1.4 -6.2 0Z" transform="translate(196.4 48.4) rotate(-141)" opacity="0.75"/><path d="M-6.4 0 C-2.1 -1.2 1.6 -2.3 3.2 -2.3 C5.3 -2.3 6.4 -1.3 6.4 0 C6.4 1.3 5.3 2.3 3.2 2.3 C1.6 2.3 -2.1 1.2 -6.4 0Z" transform="translate(59.3 187.3) rotate(167)" opacity="0.88"/><path d="M-7.6 0 C-2.5 -1.4 1.9 -2.7 3.8 -2.7 C6.4 -2.7 7.6 -1.5 7.6 0 C7.6 1.5 6.4 2.7 3.8 2.7 C1.9 2.7 -2.5 1.4 -7.6 0Z" transform="translate(143.5 284.6) rotate(140)" opacity="0.74"/><path d="M-4.5 0 C-1.5 -0.9 1.1 -1.9 2.3 -1.9 C3.8 -1.9 4.5 -1.0 4.5 0 C4.5 1.0 3.8 1.9 2.3 1.9 C1.1 1.9 -1.5 0.9 -4.5 0Z" transform="translate(486.5 81.7) rotate(-19)" opacity="0.95"/><path d="M-4.0 0 C-1.3 -0.9 1.0 -1.7 2.0 -1.7 C3.4 -1.7 4.0 -1.0 4.0 0 C4.0 1.0 3.4 1.7 2.0 1.7 C1.0 1.7 -1.3 0.9 -4.0 0Z" transform="translate(108.7 79.9) rotate(-164)" opacity="0.82"/><path d="M-6.7 0 C-2.2 -1.2 1.7 -2.3 3.3 -2.3 C5.6 -2.3 6.7 -1.3 6.7 0 C6.7 1.3 5.6 2.3 3.3 2.3 C1.7 2.3 -2.2 1.2 -6.7 0Z" transform="translate(101.7 171.8) rotate(175)" opacity="0.86"/><path d="M-3.0 0 C-1.0 -0.6 0.7 -1.2 1.5 -1.2 C2.5 -1.2 3.0 -0.6 3.0 0 C3.0 0.6 2.5 1.2 1.5 1.2 C0.7 1.2 -1.0 0.6 -3.0 0Z" transform="translate(297.3 86.5) rotate(-118)" opacity="0.19"/><path d="M-5.1 0 C-1.7 -0.9 1.3 -1.9 2.6 -1.9 C4.3 -1.9 5.1 -1.0 5.1 0 C5.1 1.0 4.3 1.9 2.6 1.9 C1.3 1.9 -1.7 0.9 -5.1 0Z" transform="translate(396.1 295.4) rotate(67)" opacity="0.75"/><path d="M-4.1 0 C-1.4 -0.7 1.0 -1.5 2.1 -1.5 C3.4 -1.5 4.1 -0.8 4.1 0 C4.1 0.8 3.4 1.5 2.1 1.5 C1.0 1.5 -1.4 0.7 -4.1 0Z" transform="translate(362.4 102.3) rotate(-46)" opacity="0.17"/><path d="M-4.0 0 C-1.3 -0.7 1.0 -1.5 2.0 -1.5 C3.4 -1.5 4.0 -0.8 4.0 0 C4.0 0.8 3.4 1.5 2.0 1.5 C1.0 1.5 -1.3 0.7 -4.0 0Z" transform="translate(294.2 123.0) rotate(-154)" opacity="0.11"/><path d="M-6.7 0 C-2.2 -1.3 1.7 -2.6 3.4 -2.6 C5.6 -2.6 6.7 -1.4 6.7 0 C6.7 1.4 5.6 2.6 3.4 2.6 C1.7 2.6 -2.2 1.3 -6.7 0Z" transform="translate(230.9 318.5) rotate(116)" opacity="0.82"/><path d="M-4.8 0 C-1.6 -0.8 1.2 -1.7 2.4 -1.7 C4.0 -1.7 4.8 -0.9 4.8 0 C4.8 0.9 4.0 1.7 2.4 1.7 C1.2 1.7 -1.6 0.8 -4.8 0Z" transform="translate(442.3 131.4) rotate(-4)" opacity="0.58"/><path d="M-5.1 0 C-1.7 -1.1 1.3 -2.2 2.6 -2.2 C4.3 -2.2 5.1 -1.2 5.1 0 C5.1 1.2 4.3 2.2 2.6 2.2 C1.3 2.2 -1.7 1.1 -5.1 0Z" transform="translate(432.5 89.0) rotate(-25)" opacity="0.54"/><path d="M-4.9 0 C-1.6 -0.9 1.2 -1.7 2.4 -1.7 C4.1 -1.7 4.9 -1.0 4.9 0 C4.9 1.0 4.1 1.7 2.4 1.7 C1.2 1.7 -1.6 0.9 -4.9 0Z" transform="translate(250.7 190.3) rotate(143)" opacity="0.48"/><path d="M-3.3 0 C-1.1 -0.5 0.8 -1.1 1.6 -1.1 C2.8 -1.1 3.3 -0.6 3.3 0 C3.3 0.6 2.8 1.1 1.6 1.1 C0.8 1.1 -1.1 0.5 -3.3 0Z" transform="translate(336.4 210.2) rotate(83)" opacity="0.28"/><path d="M-6.0 0 C-2.0 -1.3 1.5 -2.7 3.0 -2.7 C5.1 -2.7 6.0 -1.5 6.0 0 C6.0 1.5 5.1 2.7 3.0 2.7 C1.5 2.7 -2.0 1.3 -6.0 0Z" transform="translate(150.2 175.4) rotate(166)" opacity="0.89"/><path d="M-4.3 0 C-1.4 -0.7 1.1 -1.5 2.2 -1.5 C3.6 -1.5 4.3 -0.8 4.3 0 C4.3 0.8 3.6 1.5 2.2 1.5 C1.1 1.5 -1.4 0.7 -4.3 0Z" transform="translate(264.6 132.3) rotate(-171)" opacity="0.19"/><path d="M-3.3 0 C-1.1 -0.7 0.8 -1.5 1.6 -1.5 C2.7 -1.5 3.3 -0.8 3.3 0 C3.3 0.8 2.7 1.5 1.6 1.5 C0.8 1.5 -1.1 0.7 -3.3 0Z" transform="translate(360.3 25.5) rotate(-73)" opacity="0.67"/><path d="M-3.3 0 C-1.1 -0.7 0.8 -1.5 1.7 -1.5 C2.8 -1.5 3.3 -0.8 3.3 0 C3.3 0.8 2.8 1.5 1.7 1.5 C0.8 1.5 -1.1 0.7 -3.3 0Z" transform="translate(272.2 68.0) rotate(-125)" opacity="0.45"/><path d="M-5.4 0 C-1.8 -1.0 1.4 -2.0 2.7 -2.0 C4.6 -2.0 5.4 -1.1 5.4 0 C5.4 1.1 4.6 2.0 2.7 2.0 C1.4 2.0 -1.8 1.0 -5.4 0Z" transform="translate(164.3 103.7) rotate(-165)" opacity="0.95"/><path d="M-3.1 0 C-1.0 -0.6 0.8 -1.2 1.5 -1.2 C2.6 -1.2 3.1 -0.7 3.1 0 C3.1 0.7 2.6 1.2 1.5 1.2 C0.8 1.2 -1.0 0.6 -3.1 0Z" transform="translate(352.2 153.3) rotate(30)" opacity="0.12"/><path d="M-5.2 0 C-1.7 -1.1 1.3 -2.2 2.6 -2.2 C4.3 -2.2 5.2 -1.2 5.2 0 C5.2 1.2 4.3 2.2 2.6 2.2 C1.3 2.2 -1.7 1.1 -5.2 0Z" transform="translate(332.2 32.7) rotate(-90)" opacity="0.52"/><path d="M-5.9 0 C-2.0 -1.2 1.5 -2.4 2.9 -2.4 C5.0 -2.4 5.9 -1.3 5.9 0 C5.9 1.3 5.0 2.4 2.9 2.4 C1.5 2.4 -2.0 1.2 -5.9 0Z" transform="translate(295.2 12.7) rotate(-108)" opacity="0.74"/><path d="M-3.9 0 C-1.3 -0.8 1.0 -1.7 2.0 -1.7 C3.3 -1.7 3.9 -0.9 3.9 0 C3.9 0.9 3.3 1.7 2.0 1.7 C1.0 1.7 -1.3 0.8 -3.9 0Z" transform="translate(92.9 44.2) rotate(-159)" opacity="0.85"/><path d="M-7.8 0 C-2.6 -1.4 1.9 -2.9 3.9 -2.9 C6.5 -2.9 7.8 -1.6 7.8 0 C7.8 1.6 6.5 2.9 3.9 2.9 C1.9 2.9 -2.6 1.4 -7.8 0Z" transform="translate(69.4 -5.8) rotate(-148)" opacity="0.88"/><path d="M-4.2 0 C-1.4 -0.8 1.0 -1.6 2.1 -1.6 C3.5 -1.6 4.2 -0.9 4.2 0 C4.2 0.9 3.5 1.6 2.1 1.6 C1.0 1.6 -1.4 0.8 -4.2 0Z" transform="translate(491.5 247.8) rotate(34)" opacity="0.87"/><path d="M-3.4 0 C-1.1 -0.7 0.9 -1.4 1.7 -1.4 C2.9 -1.4 3.4 -0.8 3.4 0 C3.4 0.8 2.9 1.4 1.7 1.4 C0.9 1.4 -1.1 0.7 -3.4 0Z" transform="translate(395.1 84.6) rotate(-34)" opacity="0.42"/><path d="M-4.8 0 C-1.6 -1.0 1.2 -2.0 2.4 -2.0 C4.0 -2.0 4.8 -1.1 4.8 0 C4.8 1.1 4.0 2.0 2.4 2.0 C1.2 2.0 -1.6 1.0 -4.8 0Z" transform="translate(465.5 73.9) rotate(-29)" opacity="0.87"/><path d="M-4.0 0 C-1.3 -0.9 1.0 -1.7 2.0 -1.7 C3.4 -1.7 4.0 -0.9 4.0 0 C4.0 0.9 3.4 1.7 2.0 1.7 C1.0 1.7 -1.3 0.9 -4.0 0Z" transform="translate(215.2 101.0) rotate(-159)" opacity="0.54"/><path d="M-5.6 0 C-1.9 -1.2 1.4 -2.4 2.8 -2.4 C4.7 -2.4 5.6 -1.3 5.6 0 C5.6 1.3 4.7 2.4 2.8 2.4 C1.4 2.4 -1.9 1.2 -5.6 0Z" transform="translate(229.5 135.7) rotate(-179)" opacity="0.51"/><path d="M-3.9 0 C-1.3 -0.7 1.0 -1.4 1.9 -1.4 C3.3 -1.4 3.9 -0.8 3.9 0 C3.9 0.8 3.3 1.4 1.9 1.4 C1.0 1.4 -1.3 0.7 -3.9 0Z" transform="translate(414.9 202.1) rotate(38)" opacity="0.56"/><path d="M-4.1 0 C-1.4 -0.8 1.0 -1.5 2.0 -1.5 C3.4 -1.5 4.1 -0.8 4.1 0 C4.1 0.8 3.4 1.5 2.0 1.5 C1.0 1.5 -1.4 0.8 -4.1 0Z" transform="translate(355.3 182.8) rotate(55)" opacity="0.15"/><path d="M-6.8 0 C-2.3 -1.5 1.7 -3.0 3.4 -3.0 C5.7 -3.0 6.8 -1.7 6.8 0 C6.8 1.7 5.7 3.0 3.4 3.0 C1.7 3.0 -2.3 1.5 -6.8 0Z" transform="translate(-5.8 -4.8) rotate(-153)" opacity="0.80"/></g><g transform="translate(274.3 90.5) scale(0.1829)">
<ellipse cx="320" cy="238" rx="78" ry="48" fill="#f4f5f6"/>
<circle cx="175" cy="228" r="52" fill="#f7f7f8"/>
<path d="M250 270 L240 350 M290 280 L300 350 M370 270 L380 340" stroke="#f4f5f6" stroke-width="20" stroke-linecap="round" fill="none"/>
<path d="M105 370 C140 368 175 366 200 369 C260 366 330 362 380 356 C430 340 480 326 525 319 L527 331 C480 340 440 356 400 376 C340 396 270 402 230 398 C215 394 205 388 195 386 C160 384 130 384 105 382 Z" fill="#2a92d8"/>
<ellipse cx="152" cy="165" rx="30" ry="15" transform="rotate(-25 152 165)" fill="#2a92d8"/>
<circle cx="100" cy="238" r="14.5" fill="#2a92d8"/>
<circle cx="230" cy="208" r="12.5" fill="#2a92d8"/>
<circle cx="160" cy="212" r="6" fill="#5cb0e2" opacity=".7"/>
<path d="M200 264 C232 250 266 226 277 192" fill="none" stroke="#2a92d8" stroke-width="21" stroke-linecap="round"/>
<path d="M360 136 C380 124 408 126 420 150" fill="none" stroke="#2a92d8" stroke-width="27" stroke-linecap="round"/>
<ellipse cx="410" cy="240" rx="14" ry="29" transform="rotate(-16 410 240)" fill="#5cb0e2" opacity=".9"/>
<path d="M204 300 L198 323" fill="none" stroke="#5cb0e2" stroke-width="10" stroke-linecap="round"/>
</g></svg></div>
</div>
<div id="frame"></div>
</body>
</html>
